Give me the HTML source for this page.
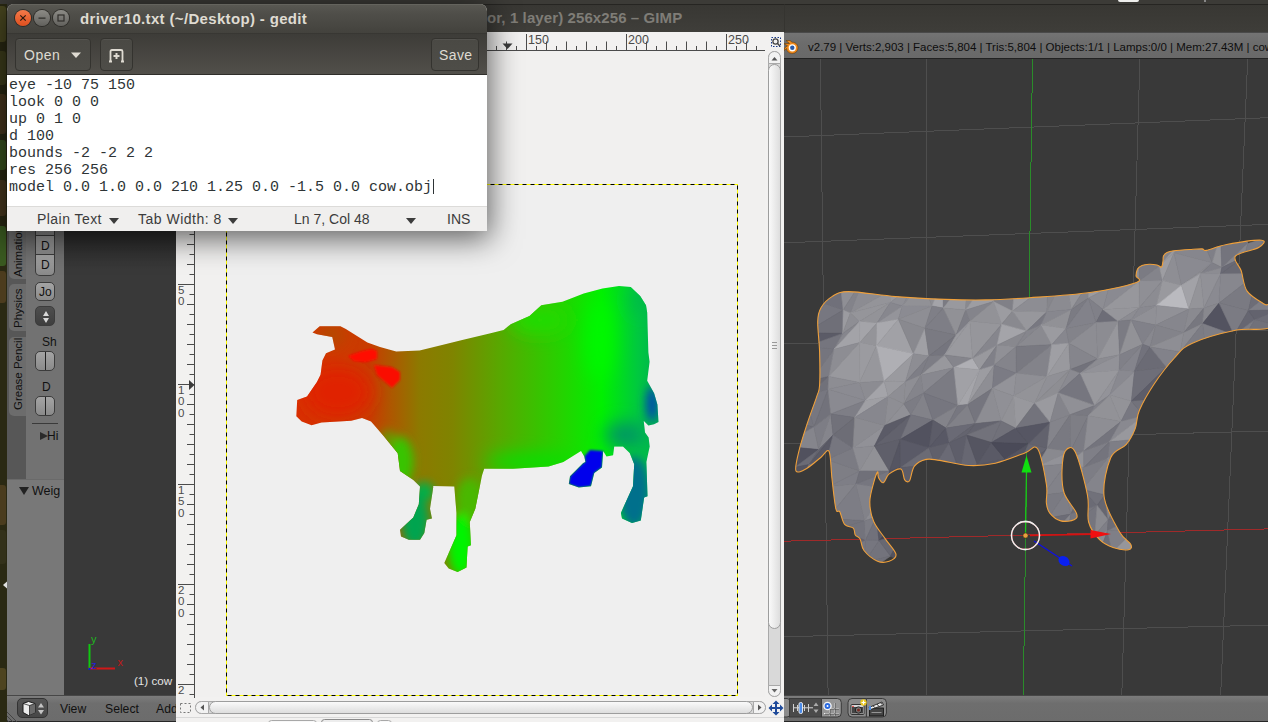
<!DOCTYPE html>
<html><head><meta charset="utf-8">
<style>
*{margin:0;padding:0;box-sizing:border-box}
html,body{width:1268px;height:722px;overflow:hidden;background:#3c3b37;font-family:"Liberation Sans",sans-serif}
.a{position:absolute}
#launch{left:0;top:4px;width:7px;height:718px;background:#2a2913}
/* blender */
#bl{left:7px;top:32px;width:1261px;height:690px;background:#393939}
#blinfo{left:784px;top:32px;width:484px;height:27px;background:linear-gradient(#747474,#6c6c6c 40%,#696969);border-top:1px solid #4a4a4a;border-bottom:1.5px solid #222}
#bltabs{left:7px;top:230px;width:19px;height:249px;background:#575757}
#blpanel{left:26px;top:230px;width:38px;height:249px;background:#727272;overflow:hidden}
#blhdr{left:7px;top:695px;width:1261px;height:27px;background:linear-gradient(#7c7c7c,#6e6e6e 30%,#6c6c6c);border-top:1px solid #474747;border-bottom:1.5px solid #262626}
/* gimp */
#gimp{left:176px;top:4px;width:608px;height:718px;background:#f2f1f0}
#gtitle{left:176px;top:4px;width:608px;height:28px;background:linear-gradient(#383733,#3f3e3a);border-top:1px solid #262522;color:#7f7d77;font-weight:bold;font-size:15px}
#btitle{left:784px;top:4px;width:484px;height:28px;background:linear-gradient(#383733,#3e3d39);border-top:1px solid #262522;border-left:1px solid #353430}
/* gedit */
#gedit{left:7px;top:4px;width:480px;height:227px;background:#f2f1f0;border-radius:7px 7px 0 0;overflow:hidden}
#gshadow{left:7px;top:4px;width:480px;height:227px;box-shadow:0 5px 30px 3px rgba(0,0,0,.6);border-radius:7px 7px 0 0}
#gedtitle{left:0;top:0;width:480px;height:29px;background:linear-gradient(#5a5953,#504f4a 30%,#43423d);box-shadow:inset 0 1px 0 #64635d}
#gedtool{left:0;top:29px;width:480px;height:42px;background:linear-gradient(#3d3c38,#514f4a);border-top:1px solid #383733;border-bottom:1px solid #2f2e2a}
#gedtext{left:0;top:71px;width:480px;height:131px;background:#fff;font-family:"Liberation Mono",monospace;font-size:15px;line-height:17px;color:#2e3436;padding:2px 0 0 2px;white-space:pre}
#gedstat{left:0;top:202px;width:480px;height:25px;background:#f0efee;border-top:1px solid #dcdbd9;font-size:14px;color:#3c3c3c}
.wb{position:absolute;top:6px;width:16px;height:16px;border-radius:50%;box-shadow:0 0 0 1px #2d2c28}
.wb svg{position:absolute;left:0;top:0}
.close{background:linear-gradient(#f47a4a,#df4f1e)}
.gray{background:linear-gradient(#8c8b86,#62615d)}
.ttl{font-size:15px;font-weight:bold;color:#dfdbd2;letter-spacing:.34px;white-space:pre}
.tbtn{border:1px solid #34332f;border-radius:4px;background:linear-gradient(#4a4944,#4e4d48);box-shadow:inset 0 1px 0 rgba(255,255,255,.06)}
#gedstat span{white-space:pre}
.tab{left:9px;width:17px;background:#6c6c6c;border-radius:5px 0 0 5px;overflow:hidden}
.vt{position:absolute;transform-origin:0 0;transform:rotate(-90deg);font-size:11.5px;color:#111;white-space:nowrap}
.bbtn{width:20px;border:1px solid #3c3c3c;border-radius:5px;background:linear-gradient(#a4a4a4,#8a8a8a)}
.bt{font-size:12px;color:#111;white-space:pre}
</style></head><body>
<div id="launch" class="a"></div>
<div class="a" style="left:1118px;top:-3px;width:21px;height:5px;background:#eeeeec;border-radius:2px"></div><div class="a" style="left:1204px;top:0;width:2px;height:2px;background:#888"></div>
<svg class="a" style="left:0;top:0" width="8" height="722">
<rect x="-3" y="6" width="9" height="36" rx="3" fill="#4a4820"/>
<rect x="-3" y="51" width="9" height="34" rx="3" fill="#3f3e1c"/>
<rect x="-3" y="94" width="9" height="40" rx="3" fill="#48381e"/>
<rect x="-3" y="140" width="9" height="30" rx="3" fill="#3a5420"/>
<rect x="-3" y="180" width="9" height="36" rx="3" fill="#4a3a20"/>
<rect x="-3" y="226" width="9" height="40" rx="3" fill="#3a5a20"/>
<rect x="-3" y="271" width="9" height="32" rx="3" fill="#4c3c1e"/>
<rect x="-3" y="485" width="9" height="40" rx="3" fill="#4a3c1e"/>
<rect x="-3" y="530" width="9" height="34" rx="3" fill="#33311a"/>
<path d="M3 585L7 581.5V588.5Z" fill="#e0e0e0"/>
<rect x="-3" y="668" width="9" height="22" rx="3" fill="#4e4420"/>
</svg>
<div id="bl" class="a"></div>
<svg class="a" style="left:0;top:0" width="1268" height="722" shape-rendering="crispEdges"><line x1="820.4" y1="59" x2="828.1" y2="695" stroke="#4e4e4e"/><line x1="926.3" y1="59" x2="926.3" y2="695" stroke="#4e4e4e"/><line x1="1139.9" y1="59" x2="1121.8" y2="695" stroke="#4e4e4e"/><line x1="1247.7" y1="59" x2="1220.7" y2="695" stroke="#4e4e4e"/><line x1="784" y1="137" x2="1268" y2="117.7" stroke="#4e4e4e"/><line x1="784" y1="242.8" x2="1268" y2="224.4" stroke="#4e4e4e"/><line x1="784" y1="344" x2="1268" y2="330" stroke="#4e4e4e"/><line x1="784" y1="444" x2="1268" y2="431" stroke="#4e4e4e"/><line x1="784" y1="636.7" x2="1268" y2="625.1" stroke="#4e4e4e"/><line x1="784" y1="541.2" x2="1268" y2="528.9" stroke="#a02a2a"/><line x1="1032.5" y1="59" x2="1023.3" y2="695" stroke="#2a8c2a"/></svg>
<svg class="a" style="left:0;top:0" width="1268" height="722">
<defs>
<clipPath id="bc"><path d="M848.7 291.6C859.3 291.6 879.7 295.3 895.7 296.6C911.8 297.9 930.0 298.8 945.0 299.4C960.0 299.9 971.3 300.2 985.4 299.9C999.5 299.6 1012.3 298.9 1029.7 297.7C1047.1 296.5 1072.2 295.1 1090.0 292.5C1107.8 289.9 1128.8 285.1 1136.5 282.4C1144.2 279.6 1135.8 278.2 1136.0 276.0C1136.2 273.8 1136.5 270.8 1137.5 269.0C1138.5 267.2 1140.1 266.3 1142.0 265.5C1143.9 264.7 1146.5 264.4 1149.0 264.3C1151.5 264.2 1154.9 264.6 1157.0 265.0C1159.1 265.4 1160.5 267.7 1161.5 267.0C1162.5 266.3 1162.7 262.8 1163.0 261.0C1163.3 259.2 1162.8 257.4 1163.5 256.0C1164.2 254.6 1165.2 253.4 1167.0 252.5C1168.8 251.6 1170.2 251.3 1174.0 250.8C1177.8 250.3 1185.3 249.8 1190.0 249.5C1194.7 249.2 1199.3 248.8 1202.0 248.9C1204.7 249.1 1202.2 251.1 1206.3 250.4C1210.4 249.7 1217.5 246.2 1226.7 244.5C1235.9 242.8 1256.3 239.7 1261.6 240.2C1266.9 240.7 1263.1 244.8 1258.7 247.5C1254.3 250.2 1238.3 252.3 1235.4 256.2C1232.5 260.1 1239.2 264.9 1241.2 270.7C1243.2 276.5 1243.2 285.5 1247.1 291.1C1251.0 296.7 1260.7 301.8 1264.5 304.2C1268.3 306.6 1269.1 301.7 1270.0 305.6C1270.9 309.5 1275.8 323.3 1270.0 327.4C1264.2 331.5 1248.4 327.6 1235.4 330.3C1222.4 333.0 1202.0 338.8 1191.8 343.4C1181.6 348.0 1180.7 351.2 1174.4 358.0C1168.1 364.8 1159.8 375.5 1154.0 384.2C1148.2 392.9 1142.6 402.9 1139.4 410.3C1136.2 417.8 1137.3 423.2 1135.1 428.9C1132.9 434.6 1130.4 439.6 1126.3 444.4C1122.2 449.2 1114.4 449.0 1110.7 457.7C1107.0 466.4 1102.6 484.1 1104.1 496.5C1105.6 508.9 1115.2 524.0 1119.6 532.0C1124.0 540.0 1129.2 541.2 1130.7 544.2C1132.2 547.2 1131.5 549.2 1128.5 549.7C1125.5 550.2 1117.8 549.2 1113.0 547.5C1108.2 545.8 1103.7 544.0 1099.6 539.7C1095.5 535.5 1090.6 529.4 1088.6 522.0C1086.6 514.6 1089.7 507.0 1087.5 495.4C1085.3 483.8 1079.0 459.5 1075.3 452.1C1071.6 444.7 1067.5 447.9 1065.3 451.0C1063.1 454.1 1062.2 464.0 1062.0 471.0C1061.8 478.0 1061.8 486.2 1064.2 493.2C1066.6 500.2 1074.8 508.7 1076.4 513.1C1078.1 517.5 1076.7 518.5 1074.1 519.8C1071.5 521.1 1064.8 522.0 1060.8 520.9C1056.8 519.8 1052.2 516.1 1049.8 513.1C1047.4 510.1 1047.0 507.9 1046.4 503.1C1045.8 498.3 1047.9 493.4 1046.4 484.3C1044.9 475.2 1041.3 454.0 1037.6 448.8C1033.9 443.6 1031.3 450.9 1024.3 453.3C1017.3 455.7 1004.6 461.2 995.4 463.2C986.1 465.2 978.1 466.0 968.8 465.5C959.5 465.0 946.7 461.4 939.6 460.4C932.5 459.4 930.3 458.4 926.1 459.4C921.9 460.4 917.1 462.6 914.4 466.2C911.6 469.8 911.2 478.4 909.6 480.7C908.0 483.0 906.2 481.7 904.7 479.8C903.2 477.9 903.5 470.1 900.9 469.1C898.3 468.1 892.1 471.6 889.2 473.9C886.3 476.2 885.2 482.0 883.4 482.7C881.6 483.4 879.5 479.6 878.5 477.8C877.5 476.0 878.4 471.2 877.6 472.0C876.8 472.8 875.0 477.7 873.7 482.7C872.4 487.7 869.8 495.6 869.8 502.1C869.8 508.6 871.1 515.4 873.7 521.5C876.3 527.6 881.6 533.4 885.3 538.9C889.0 544.4 895.4 550.7 896.0 554.4C896.6 558.1 892.3 560.1 889.2 561.2C886.1 562.3 881.8 563.0 877.6 561.2C873.4 559.4 866.9 554.2 864.0 550.5C861.1 546.8 861.6 541.5 860.1 538.9C858.6 536.3 856.4 536.8 855.3 535.0C854.2 533.2 855.1 530.0 853.3 528.2C851.5 526.4 846.9 527.1 844.6 524.4C842.4 521.7 841.2 514.4 839.8 511.8C838.3 509.2 837.2 514.4 835.9 508.9C834.6 503.4 833.1 488.4 832.0 478.8C830.9 469.2 830.9 455.2 829.1 451.6C827.3 448.0 824.7 454.4 821.0 457.2C817.3 460.0 811.3 465.9 807.1 468.2C802.9 470.5 797.4 473.8 796.0 471.0C794.6 468.2 796.9 459.4 798.8 451.6C800.6 443.8 804.1 433.2 807.1 424.0C810.1 414.8 814.7 402.8 816.8 396.3C818.9 389.8 819.1 392.6 819.6 385.2C820.1 377.8 819.9 362.6 819.6 352.0C819.3 341.4 817.5 328.9 817.7 321.5C817.9 314.1 818.6 311.8 821.0 307.7C823.4 303.6 827.4 299.3 832.0 296.6C836.6 293.9 838.1 291.6 848.7 291.6Z"/></clipPath>
</defs>
<g clip-path="url(#bc)">
<path d="M786.7 237.5L789.2 255.4L767.6 256.6Z" fill="#6a6a74" stroke="#6a6a74" stroke-width=".6"/><path d="M789.2 255.4L795.3 285.6L759.0 282.1Z" fill="#7e7e86" stroke="#7e7e86" stroke-width=".6"/><path d="M790.5 334.8L794.1 347.2L765.6 356.9Z" fill="#686872" stroke="#686872" stroke-width=".6"/><path d="M794.1 347.2L798.6 367.1L760.2 369.0Z" fill="#76767f" stroke="#76767f" stroke-width=".6"/><path d="M798.6 367.1L788.5 401.6L769.3 405.1Z" fill="#808088" stroke="#808088" stroke-width=".6"/><path d="M788.5 401.6L783.7 419.8L768.4 418.1Z" fill="#72727b" stroke="#72727b" stroke-width=".6"/><path d="M783.7 419.8L781.7 446.0L775.6 434.8Z" fill="#676771" stroke="#676771" stroke-width=".6"/><path d="M781.7 446.0L794.8 467.3L773.5 462.2Z" fill="#6e6e78" stroke="#6e6e78" stroke-width=".6"/><path d="M794.8 467.3L796.8 485.6L760.6 482.1Z" fill="#696974" stroke="#696974" stroke-width=".6"/><path d="M796.8 485.6L793.5 513.7L763.6 517.7Z" fill="#535360" stroke="#535360" stroke-width=".6"/><path d="M793.5 513.7L791.4 534.2L761.3 536.5Z" fill="#5e5e6a" stroke="#5e5e6a" stroke-width=".6"/><path d="M791.4 534.2L796.1 566.0L769.5 555.7Z" fill="#666670" stroke="#666670" stroke-width=".6"/><path d="M815.6 221.9L818.8 232.1L786.7 237.5Z" fill="#74747d" stroke="#74747d" stroke-width=".6"/><path d="M786.7 237.5L818.8 232.1L789.2 255.4Z" fill="#797982" stroke="#797982" stroke-width=".6"/><path d="M818.8 232.1L810.9 262.0L789.2 255.4Z" fill="#808088" stroke="#808088" stroke-width=".6"/><path d="M789.2 255.4L810.9 262.0L795.3 285.6Z" fill="#808087" stroke="#808087" stroke-width=".6"/><path d="M810.9 262.0L804.4 281.3L795.3 285.6Z" fill="#818188" stroke="#818188" stroke-width=".6"/><path d="M795.3 285.6L804.4 281.3L785.4 306.3Z" fill="#7c7c84" stroke="#7c7c84" stroke-width=".6"/><path d="M804.4 281.3L807.0 298.1L785.4 306.3Z" fill="#73737c" stroke="#73737c" stroke-width=".6"/><path d="M785.4 306.3L807.0 298.1L790.5 334.8Z" fill="#75757e" stroke="#75757e" stroke-width=".6"/><path d="M807.0 298.1L805.1 332.8L790.5 334.8Z" fill="#71717b" stroke="#71717b" stroke-width=".6"/><path d="M790.5 334.8L805.1 332.8L794.1 347.2Z" fill="#70707a" stroke="#70707a" stroke-width=".6"/><path d="M805.1 332.8L806.3 346.5L794.1 347.2Z" fill="#71717b" stroke="#71717b" stroke-width=".6"/><path d="M794.1 347.2L806.3 346.5L798.6 367.1Z" fill="#60606b" stroke="#60606b" stroke-width=".6"/><path d="M806.3 346.5L811.0 380.7L798.6 367.1Z" fill="#6f6f78" stroke="#6f6f78" stroke-width=".6"/><path d="M798.6 367.1L811.0 380.7L788.5 401.6Z" fill="#71717a" stroke="#71717a" stroke-width=".6"/><path d="M811.0 380.7L805.5 396.1L788.5 401.6Z" fill="#666671" stroke="#666671" stroke-width=".6"/><path d="M788.5 401.6L805.5 396.1L783.7 419.8Z" fill="#707079" stroke="#707079" stroke-width=".6"/><path d="M805.5 396.1L813.9 426.9L783.7 419.8Z" fill="#75757e" stroke="#75757e" stroke-width=".6"/><path d="M783.7 419.8L813.9 426.9L781.7 446.0Z" fill="#6d6d77" stroke="#6d6d77" stroke-width=".6"/><path d="M813.9 426.9L818.7 449.6L781.7 446.0Z" fill="#85858c" stroke="#85858c" stroke-width=".6"/><path d="M781.7 446.0L818.7 449.6L794.8 467.3Z" fill="#51515e" stroke="#51515e" stroke-width=".6"/><path d="M818.7 449.6L809.0 464.5L794.8 467.3Z" fill="#6b6b75" stroke="#6b6b75" stroke-width=".6"/><path d="M794.8 467.3L809.0 464.5L796.8 485.6Z" fill="#545461" stroke="#545461" stroke-width=".6"/><path d="M809.0 464.5L810.5 495.9L796.8 485.6Z" fill="#72727b" stroke="#72727b" stroke-width=".6"/><path d="M796.8 485.6L810.5 495.9L793.5 513.7Z" fill="#84848b" stroke="#84848b" stroke-width=".6"/><path d="M810.5 495.9L821.2 505.7L793.5 513.7Z" fill="#4b4b59" stroke="#4b4b59" stroke-width=".6"/><path d="M793.5 513.7L821.2 505.7L791.4 534.2Z" fill="#676772" stroke="#676772" stroke-width=".6"/><path d="M821.2 505.7L807.2 530.2L791.4 534.2Z" fill="#6b6b75" stroke="#6b6b75" stroke-width=".6"/><path d="M791.4 534.2L807.2 530.2L796.1 566.0Z" fill="#61616c" stroke="#61616c" stroke-width=".6"/><path d="M807.2 530.2L808.2 557.7L796.1 566.0Z" fill="#6a6a74" stroke="#6a6a74" stroke-width=".6"/><path d="M796.1 566.0L808.2 557.7L789.5 584.0Z" fill="#4a4a58" stroke="#4a4a58" stroke-width=".6"/><path d="M818.8 232.1L844.2 239.4L810.9 262.0Z" fill="#828289" stroke="#828289" stroke-width=".6"/><path d="M844.2 239.4L836.3 261.1L810.9 262.0Z" fill="#7c7c84" stroke="#7c7c84" stroke-width=".6"/><path d="M810.9 262.0L836.3 261.1L804.4 281.3Z" fill="#777780" stroke="#777780" stroke-width=".6"/><path d="M836.3 261.1L839.2 274.0L804.4 281.3Z" fill="#70707a" stroke="#70707a" stroke-width=".6"/><path d="M804.4 281.3L839.2 274.0L807.0 298.1Z" fill="#7d7d85" stroke="#7d7d85" stroke-width=".6"/><path d="M839.2 274.0L843.2 310.0L807.0 298.1Z" fill="#70707a" stroke="#70707a" stroke-width=".6"/><path d="M807.0 298.1L843.2 310.0L805.1 332.8Z" fill="#777780" stroke="#777780" stroke-width=".6"/><path d="M843.2 310.0L842.7 333.4L805.1 332.8Z" fill="#6f6f78" stroke="#6f6f78" stroke-width=".6"/><path d="M805.1 332.8L842.7 333.4L806.3 346.5Z" fill="#5b5b67" stroke="#5b5b67" stroke-width=".6"/><path d="M842.7 333.4L834.1 349.2L806.3 346.5Z" fill="#75757e" stroke="#75757e" stroke-width=".6"/><path d="M806.3 346.5L834.1 349.2L811.0 380.7Z" fill="#75757e" stroke="#75757e" stroke-width=".6"/><path d="M834.1 349.2L828.9 376.4L811.0 380.7Z" fill="#7c7c84" stroke="#7c7c84" stroke-width=".6"/><path d="M811.0 380.7L828.9 376.4L805.5 396.1Z" fill="#686872" stroke="#686872" stroke-width=".6"/><path d="M828.9 376.4L828.1 389.2L805.5 396.1Z" fill="#71717a" stroke="#71717a" stroke-width=".6"/><path d="M805.5 396.1L828.1 389.2L813.9 426.9Z" fill="#777780" stroke="#777780" stroke-width=".6"/><path d="M828.1 389.2L830.8 413.9L813.9 426.9Z" fill="#72727b" stroke="#72727b" stroke-width=".6"/><path d="M813.9 426.9L830.8 413.9L818.7 449.6Z" fill="#7d7d85" stroke="#7d7d85" stroke-width=".6"/><path d="M830.8 413.9L833.1 434.9L818.7 449.6Z" fill="#85858c" stroke="#85858c" stroke-width=".6"/><path d="M818.7 449.6L833.1 434.9L809.0 464.5Z" fill="#64646f" stroke="#64646f" stroke-width=".6"/><path d="M833.1 434.9L827.0 459.7L809.0 464.5Z" fill="#595965" stroke="#595965" stroke-width=".6"/><path d="M809.0 464.5L827.0 459.7L810.5 495.9Z" fill="#71717b" stroke="#71717b" stroke-width=".6"/><path d="M827.0 459.7L828.8 486.5L810.5 495.9Z" fill="#787881" stroke="#787881" stroke-width=".6"/><path d="M810.5 495.9L828.8 486.5L821.2 505.7Z" fill="#71717a" stroke="#71717a" stroke-width=".6"/><path d="M828.8 486.5L827.5 518.7L821.2 505.7Z" fill="#6f6f79" stroke="#6f6f79" stroke-width=".6"/><path d="M821.2 505.7L827.5 518.7L807.2 530.2Z" fill="#5f5f6a" stroke="#5f5f6a" stroke-width=".6"/><path d="M827.5 518.7L838.1 528.7L807.2 530.2Z" fill="#5d5d69" stroke="#5d5d69" stroke-width=".6"/><path d="M807.2 530.2L838.1 528.7L808.2 557.7Z" fill="#6e6e78" stroke="#6e6e78" stroke-width=".6"/><path d="M838.1 528.7L831.5 555.3L808.2 557.7Z" fill="#5a5a66" stroke="#5a5a66" stroke-width=".6"/><path d="M808.2 557.7L831.5 555.3L814.6 576.7Z" fill="#4f4f5d" stroke="#4f4f5d" stroke-width=".6"/><path d="M831.5 555.3L833.6 574.2L814.6 576.7Z" fill="#585864" stroke="#585864" stroke-width=".6"/><path d="M844.2 239.4L851.5 228.8L836.3 261.1Z" fill="#aaaaaf" stroke="#aaaaaf" stroke-width=".6"/><path d="M851.5 228.8L856.2 254.8L836.3 261.1Z" fill="#a3a3a8" stroke="#a3a3a8" stroke-width=".6"/><path d="M836.3 261.1L856.2 254.8L839.2 274.0Z" fill="#86868d" stroke="#86868d" stroke-width=".6"/><path d="M856.2 254.8L864.9 275.9L839.2 274.0Z" fill="#85858c" stroke="#85858c" stroke-width=".6"/><path d="M839.2 274.0L864.9 275.9L843.2 310.0Z" fill="#8f8f95" stroke="#8f8f95" stroke-width=".6"/><path d="M864.9 275.9L850.4 313.1L843.2 310.0Z" fill="#83838a" stroke="#83838a" stroke-width=".6"/><path d="M843.2 310.0L850.4 313.1L842.7 333.4Z" fill="#9b9ba0" stroke="#9b9ba0" stroke-width=".6"/><path d="M850.4 313.1L859.5 321.6L842.7 333.4Z" fill="#8e8e94" stroke="#8e8e94" stroke-width=".6"/><path d="M842.7 333.4L859.5 321.6L834.1 349.2Z" fill="#86868d" stroke="#86868d" stroke-width=".6"/><path d="M859.5 321.6L859.8 342.5L834.1 349.2Z" fill="#a3a3a8" stroke="#a3a3a8" stroke-width=".6"/><path d="M834.1 349.2L859.8 342.5L828.9 376.4Z" fill="#8d8d93" stroke="#8d8d93" stroke-width=".6"/><path d="M859.8 342.5L859.5 382.6L828.9 376.4Z" fill="#99999e" stroke="#99999e" stroke-width=".6"/><path d="M828.9 376.4L859.5 382.6L828.1 389.2Z" fill="#8d8d93" stroke="#8d8d93" stroke-width=".6"/><path d="M859.5 382.6L865.5 400.5L828.1 389.2Z" fill="#8b8b92" stroke="#8b8b92" stroke-width=".6"/><path d="M828.1 389.2L865.5 400.5L830.8 413.9Z" fill="#8a8a91" stroke="#8a8a91" stroke-width=".6"/><path d="M865.5 400.5L854.7 417.6L830.8 413.9Z" fill="#7e7e86" stroke="#7e7e86" stroke-width=".6"/><path d="M830.8 413.9L854.7 417.6L833.1 434.9Z" fill="#71717a" stroke="#71717a" stroke-width=".6"/><path d="M854.7 417.6L853.0 447.9L833.1 434.9Z" fill="#6d6d76" stroke="#6d6d76" stroke-width=".6"/><path d="M833.1 434.9L853.0 447.9L827.0 459.7Z" fill="#76767f" stroke="#76767f" stroke-width=".6"/><path d="M853.0 447.9L859.6 471.0L827.0 459.7Z" fill="#7b7b83" stroke="#7b7b83" stroke-width=".6"/><path d="M827.0 459.7L859.6 471.0L828.8 486.5Z" fill="#7e7e85" stroke="#7e7e85" stroke-width=".6"/><path d="M859.6 471.0L855.9 484.0L828.8 486.5Z" fill="#7e7e86" stroke="#7e7e86" stroke-width=".6"/><path d="M828.8 486.5L855.9 484.0L827.5 518.7Z" fill="#83838a" stroke="#83838a" stroke-width=".6"/><path d="M855.9 484.0L864.6 520.7L827.5 518.7Z" fill="#7d7d85" stroke="#7d7d85" stroke-width=".6"/><path d="M827.5 518.7L864.6 520.7L838.1 528.7Z" fill="#73737c" stroke="#73737c" stroke-width=".6"/><path d="M864.6 520.7L865.3 540.5L838.1 528.7Z" fill="#73737c" stroke="#73737c" stroke-width=".6"/><path d="M838.1 528.7L865.3 540.5L831.5 555.3Z" fill="#63636e" stroke="#63636e" stroke-width=".6"/><path d="M865.3 540.5L864.7 562.3L831.5 555.3Z" fill="#787881" stroke="#787881" stroke-width=".6"/><path d="M831.5 555.3L864.7 562.3L833.6 574.2Z" fill="#7f7f86" stroke="#7f7f86" stroke-width=".6"/><path d="M851.5 228.8L877.7 239.5L856.2 254.8Z" fill="#949499" stroke="#949499" stroke-width=".6"/><path d="M877.7 239.5L890.2 258.1L856.2 254.8Z" fill="#8d8d93" stroke="#8d8d93" stroke-width=".6"/><path d="M856.2 254.8L890.2 258.1L864.9 275.9Z" fill="#8b8b92" stroke="#8b8b92" stroke-width=".6"/><path d="M890.2 258.1L889.9 290.8L864.9 275.9Z" fill="#97979c" stroke="#97979c" stroke-width=".6"/><path d="M864.9 275.9L889.9 290.8L850.4 313.1Z" fill="#8c8c92" stroke="#8c8c92" stroke-width=".6"/><path d="M889.9 290.8L890.2 302.6L850.4 313.1Z" fill="#949499" stroke="#949499" stroke-width=".6"/><path d="M850.4 313.1L890.2 302.6L859.5 321.6Z" fill="#95959a" stroke="#95959a" stroke-width=".6"/><path d="M890.2 302.6L877.0 323.1L859.5 321.6Z" fill="#939398" stroke="#939398" stroke-width=".6"/><path d="M859.5 321.6L877.0 323.1L859.8 342.5Z" fill="#a4a4a9" stroke="#a4a4a9" stroke-width=".6"/><path d="M877.0 323.1L876.5 345.7L859.8 342.5Z" fill="#949499" stroke="#949499" stroke-width=".6"/><path d="M859.8 342.5L876.5 345.7L859.5 382.6Z" fill="#9b9ba0" stroke="#9b9ba0" stroke-width=".6"/><path d="M876.5 345.7L884.2 381.2L859.5 382.6Z" fill="#97979c" stroke="#97979c" stroke-width=".6"/><path d="M859.5 382.6L884.2 381.2L865.5 400.5Z" fill="#8c8c92" stroke="#8c8c92" stroke-width=".6"/><path d="M884.2 381.2L888.1 396.6L865.5 400.5Z" fill="#a4a4a9" stroke="#a4a4a9" stroke-width=".6"/><path d="M865.5 400.5L888.1 396.6L854.7 417.6Z" fill="#9f9fa4" stroke="#9f9fa4" stroke-width=".6"/><path d="M888.1 396.6L884.8 425.4L854.7 417.6Z" fill="#87878e" stroke="#87878e" stroke-width=".6"/><path d="M854.7 417.6L884.8 425.4L853.0 447.9Z" fill="#8b8b91" stroke="#8b8b91" stroke-width=".6"/><path d="M884.8 425.4L874.5 445.9L853.0 447.9Z" fill="#919197" stroke="#919197" stroke-width=".6"/><path d="M853.0 447.9L874.5 445.9L859.6 471.0Z" fill="#8d8d93" stroke="#8d8d93" stroke-width=".6"/><path d="M874.5 445.9L889.4 471.1L859.6 471.0Z" fill="#919196" stroke="#919196" stroke-width=".6"/><path d="M859.6 471.0L889.4 471.1L855.9 484.0Z" fill="#707079" stroke="#707079" stroke-width=".6"/><path d="M889.4 471.1L886.5 488.6L855.9 484.0Z" fill="#76767f" stroke="#76767f" stroke-width=".6"/><path d="M855.9 484.0L886.5 488.6L864.6 520.7Z" fill="#828289" stroke="#828289" stroke-width=".6"/><path d="M886.5 488.6L876.2 517.2L864.6 520.7Z" fill="#8c8c92" stroke="#8c8c92" stroke-width=".6"/><path d="M864.6 520.7L876.2 517.2L865.3 540.5Z" fill="#7c7c84" stroke="#7c7c84" stroke-width=".6"/><path d="M876.2 517.2L879.0 540.4L865.3 540.5Z" fill="#71717b" stroke="#71717b" stroke-width=".6"/><path d="M865.3 540.5L879.0 540.4L864.7 562.3Z" fill="#76767f" stroke="#76767f" stroke-width=".6"/><path d="M879.0 540.4L890.5 556.1L864.7 562.3Z" fill="#73737c" stroke="#73737c" stroke-width=".6"/><path d="M864.7 562.3L890.5 556.1L854.1 581.3Z" fill="#707079" stroke="#707079" stroke-width=".6"/><path d="M877.7 239.5L912.3 241.5L890.2 258.1Z" fill="#9f9fa4" stroke="#9f9fa4" stroke-width=".6"/><path d="M912.3 241.5L898.6 264.9L890.2 258.1Z" fill="#87878e" stroke="#87878e" stroke-width=".6"/><path d="M890.2 258.1L898.6 264.9L889.9 290.8Z" fill="#8d8d93" stroke="#8d8d93" stroke-width=".6"/><path d="M898.6 264.9L913.6 284.8L889.9 290.8Z" fill="#a4a4a9" stroke="#a4a4a9" stroke-width=".6"/><path d="M889.9 290.8L913.6 284.8L890.2 302.6Z" fill="#99999e" stroke="#99999e" stroke-width=".6"/><path d="M913.6 284.8L902.3 305.9L890.2 302.6Z" fill="#8f8f95" stroke="#8f8f95" stroke-width=".6"/><path d="M890.2 302.6L902.3 305.9L877.0 323.1Z" fill="#87878e" stroke="#87878e" stroke-width=".6"/><path d="M902.3 305.9L898.4 319.3L877.0 323.1Z" fill="#94949a" stroke="#94949a" stroke-width=".6"/><path d="M877.0 323.1L898.4 319.3L876.5 345.7Z" fill="#a9a9ae" stroke="#a9a9ae" stroke-width=".6"/><path d="M898.4 319.3L913.5 353.7L876.5 345.7Z" fill="#a1a1a6" stroke="#a1a1a6" stroke-width=".6"/><path d="M876.5 345.7L913.5 353.7L884.2 381.2Z" fill="#afafb4" stroke="#afafb4" stroke-width=".6"/><path d="M913.5 353.7L905.5 381.8L884.2 381.2Z" fill="#9a9a9f" stroke="#9a9a9f" stroke-width=".6"/><path d="M884.2 381.2L905.5 381.8L888.1 396.6Z" fill="#9b9ba0" stroke="#9b9ba0" stroke-width=".6"/><path d="M905.5 381.8L903.8 403.7L888.1 396.6Z" fill="#8e8e94" stroke="#8e8e94" stroke-width=".6"/><path d="M888.1 396.6L903.8 403.7L884.8 425.4Z" fill="#8e8e94" stroke="#8e8e94" stroke-width=".6"/><path d="M903.8 403.7L910.9 414.8L884.8 425.4Z" fill="#909096" stroke="#909096" stroke-width=".6"/><path d="M884.8 425.4L910.9 414.8L874.5 445.9Z" fill="#5b5b67" stroke="#5b5b67" stroke-width=".6"/><path d="M910.9 414.8L900.5 439.3L874.5 445.9Z" fill="#62626d" stroke="#62626d" stroke-width=".6"/><path d="M874.5 445.9L900.5 439.3L889.4 471.1Z" fill="#5f5f6a" stroke="#5f5f6a" stroke-width=".6"/><path d="M900.5 439.3L900.3 467.6L889.4 471.1Z" fill="#555562" stroke="#555562" stroke-width=".6"/><path d="M889.4 471.1L900.3 467.6L886.5 488.6Z" fill="#52525f" stroke="#52525f" stroke-width=".6"/><path d="M900.3 467.6L900.7 487.5L886.5 488.6Z" fill="#5e5e6a" stroke="#5e5e6a" stroke-width=".6"/><path d="M886.5 488.6L900.7 487.5L876.2 517.2Z" fill="#6b6b75" stroke="#6b6b75" stroke-width=".6"/><path d="M900.7 487.5L898.4 519.4L876.2 517.2Z" fill="#5b5b67" stroke="#5b5b67" stroke-width=".6"/><path d="M876.2 517.2L898.4 519.4L879.0 540.4Z" fill="#575763" stroke="#575763" stroke-width=".6"/><path d="M898.4 519.4L902.4 534.2L879.0 540.4Z" fill="#464654" stroke="#464654" stroke-width=".6"/><path d="M879.0 540.4L902.4 534.2L890.5 556.1Z" fill="#686872" stroke="#686872" stroke-width=".6"/><path d="M902.4 534.2L906.5 565.3L890.5 556.1Z" fill="#535360" stroke="#535360" stroke-width=".6"/><path d="M912.3 241.5L926.9 230.3L898.6 264.9Z" fill="#8e8e94" stroke="#8e8e94" stroke-width=".6"/><path d="M926.9 230.3L919.1 264.4L898.6 264.9Z" fill="#828289" stroke="#828289" stroke-width=".6"/><path d="M898.6 264.9L919.1 264.4L913.6 284.8Z" fill="#8c8c92" stroke="#8c8c92" stroke-width=".6"/><path d="M919.1 264.4L922.1 281.5L913.6 284.8Z" fill="#818188" stroke="#818188" stroke-width=".6"/><path d="M913.6 284.8L922.1 281.5L902.3 305.9Z" fill="#8d8d93" stroke="#8d8d93" stroke-width=".6"/><path d="M922.1 281.5L932.1 306.0L902.3 305.9Z" fill="#919196" stroke="#919196" stroke-width=".6"/><path d="M902.3 305.9L932.1 306.0L898.4 319.3Z" fill="#8b8b92" stroke="#8b8b92" stroke-width=".6"/><path d="M932.1 306.0L924.9 328.3L898.4 319.3Z" fill="#8e8e94" stroke="#8e8e94" stroke-width=".6"/><path d="M898.4 319.3L924.9 328.3L913.5 353.7Z" fill="#89898f" stroke="#89898f" stroke-width=".6"/><path d="M924.9 328.3L929.0 356.1L913.5 353.7Z" fill="#a0a0a5" stroke="#a0a0a5" stroke-width=".6"/><path d="M913.5 353.7L929.0 356.1L905.5 381.8Z" fill="#8d8d93" stroke="#8d8d93" stroke-width=".6"/><path d="M929.0 356.1L920.9 375.1L905.5 381.8Z" fill="#7e7e86" stroke="#7e7e86" stroke-width=".6"/><path d="M905.5 381.8L920.9 375.1L903.8 403.7Z" fill="#8e8e94" stroke="#8e8e94" stroke-width=".6"/><path d="M920.9 375.1L923.5 393.0L903.8 403.7Z" fill="#84848b" stroke="#84848b" stroke-width=".6"/><path d="M903.8 403.7L923.5 393.0L910.9 414.8Z" fill="#7c7c84" stroke="#7c7c84" stroke-width=".6"/><path d="M923.5 393.0L932.9 420.1L910.9 414.8Z" fill="#828289" stroke="#828289" stroke-width=".6"/><path d="M910.9 414.8L932.9 420.1L900.5 439.3Z" fill="#74747d" stroke="#74747d" stroke-width=".6"/><path d="M932.9 420.1L929.1 447.7L900.5 439.3Z" fill="#52525f" stroke="#52525f" stroke-width=".6"/><path d="M900.5 439.3L929.1 447.7L900.3 467.6Z" fill="#5a5a67" stroke="#5a5a67" stroke-width=".6"/><path d="M929.1 447.7L935.4 465.0L900.3 467.6Z" fill="#6b6b75" stroke="#6b6b75" stroke-width=".6"/><path d="M900.3 467.6L935.4 465.0L900.7 487.5Z" fill="#5d5d69" stroke="#5d5d69" stroke-width=".6"/><path d="M935.4 465.0L930.0 489.1L900.7 487.5Z" fill="#545461" stroke="#545461" stroke-width=".6"/><path d="M900.7 487.5L930.0 489.1L898.4 519.4Z" fill="#565663" stroke="#565663" stroke-width=".6"/><path d="M930.0 489.1L928.2 515.5L898.4 519.4Z" fill="#535360" stroke="#535360" stroke-width=".6"/><path d="M898.4 519.4L928.2 515.5L902.4 534.2Z" fill="#535360" stroke="#535360" stroke-width=".6"/><path d="M928.2 515.5L927.1 535.6L902.4 534.2Z" fill="#5b5b67" stroke="#5b5b67" stroke-width=".6"/><path d="M902.4 534.2L927.1 535.6L906.5 565.3Z" fill="#51515e" stroke="#51515e" stroke-width=".6"/><path d="M927.1 535.6L927.6 565.9L906.5 565.3Z" fill="#464654" stroke="#464654" stroke-width=".6"/><path d="M926.9 230.3L957.1 229.5L919.1 264.4Z" fill="#8e8e94" stroke="#8e8e94" stroke-width=".6"/><path d="M957.1 229.5L944.2 258.0L919.1 264.4Z" fill="#84848b" stroke="#84848b" stroke-width=".6"/><path d="M919.1 264.4L944.2 258.0L922.1 281.5Z" fill="#949499" stroke="#949499" stroke-width=".6"/><path d="M944.2 258.0L943.3 277.3L922.1 281.5Z" fill="#86868d" stroke="#86868d" stroke-width=".6"/><path d="M922.1 281.5L943.3 277.3L932.1 306.0Z" fill="#8e8e94" stroke="#8e8e94" stroke-width=".6"/><path d="M943.3 277.3L943.3 308.1L932.1 306.0Z" fill="#a4a4a9" stroke="#a4a4a9" stroke-width=".6"/><path d="M932.1 306.0L943.3 308.1L924.9 328.3Z" fill="#7f7f87" stroke="#7f7f87" stroke-width=".6"/><path d="M943.3 308.1L956.1 335.1L924.9 328.3Z" fill="#7e7e86" stroke="#7e7e86" stroke-width=".6"/><path d="M924.9 328.3L956.1 335.1L929.0 356.1Z" fill="#7a7a82" stroke="#7a7a82" stroke-width=".6"/><path d="M956.1 335.1L944.8 354.9L929.0 356.1Z" fill="#75757e" stroke="#75757e" stroke-width=".6"/><path d="M929.0 356.1L944.8 354.9L920.9 375.1Z" fill="#7d7d85" stroke="#7d7d85" stroke-width=".6"/><path d="M944.8 354.9L953.9 367.6L920.9 375.1Z" fill="#98989d" stroke="#98989d" stroke-width=".6"/><path d="M920.9 375.1L953.9 367.6L923.5 393.0Z" fill="#88888f" stroke="#88888f" stroke-width=".6"/><path d="M953.9 367.6L957.9 405.4L923.5 393.0Z" fill="#7b7b83" stroke="#7b7b83" stroke-width=".6"/><path d="M923.5 393.0L957.9 405.4L932.9 420.1Z" fill="#76767f" stroke="#76767f" stroke-width=".6"/><path d="M957.9 405.4L946.0 428.1L932.9 420.1Z" fill="#83838a" stroke="#83838a" stroke-width=".6"/><path d="M932.9 420.1L946.0 428.1L929.1 447.7Z" fill="#5c5c68" stroke="#5c5c68" stroke-width=".6"/><path d="M946.0 428.1L949.2 442.8L929.1 447.7Z" fill="#585865" stroke="#585865" stroke-width=".6"/><path d="M929.1 447.7L949.2 442.8L935.4 465.0Z" fill="#60606b" stroke="#60606b" stroke-width=".6"/><path d="M949.2 442.8L959.8 472.0L935.4 465.0Z" fill="#6a6a75" stroke="#6a6a75" stroke-width=".6"/><path d="M935.4 465.0L959.8 472.0L930.0 489.1Z" fill="#6b6b75" stroke="#6b6b75" stroke-width=".6"/><path d="M959.8 472.0L944.9 487.8L930.0 489.1Z" fill="#61616c" stroke="#61616c" stroke-width=".6"/><path d="M930.0 489.1L944.9 487.8L928.2 515.5Z" fill="#565663" stroke="#565663" stroke-width=".6"/><path d="M944.9 487.8L951.3 509.1L928.2 515.5Z" fill="#565663" stroke="#565663" stroke-width=".6"/><path d="M928.2 515.5L951.3 509.1L927.1 535.6Z" fill="#676772" stroke="#676772" stroke-width=".6"/><path d="M951.3 509.1L945.5 531.7L927.1 535.6Z" fill="#63636e" stroke="#63636e" stroke-width=".6"/><path d="M927.1 535.6L945.5 531.7L927.6 565.9Z" fill="#4f4f5c" stroke="#4f4f5c" stroke-width=".6"/><path d="M945.5 531.7L955.0 549.4L927.6 565.9Z" fill="#575764" stroke="#575764" stroke-width=".6"/><path d="M927.6 565.9L955.0 549.4L931.6 587.8Z" fill="#545461" stroke="#545461" stroke-width=".6"/><path d="M957.1 229.5L966.2 244.7L944.2 258.0Z" fill="#8f8f95" stroke="#8f8f95" stroke-width=".6"/><path d="M966.2 244.7L979.2 267.5L944.2 258.0Z" fill="#88888f" stroke="#88888f" stroke-width=".6"/><path d="M944.2 258.0L979.2 267.5L943.3 277.3Z" fill="#7f7f86" stroke="#7f7f86" stroke-width=".6"/><path d="M979.2 267.5L966.9 277.8L943.3 277.3Z" fill="#87878e" stroke="#87878e" stroke-width=".6"/><path d="M943.3 277.3L966.9 277.8L943.3 308.1Z" fill="#7b7b83" stroke="#7b7b83" stroke-width=".6"/><path d="M966.9 277.8L965.7 310.0L943.3 308.1Z" fill="#99999e" stroke="#99999e" stroke-width=".6"/><path d="M943.3 308.1L965.7 310.0L956.1 335.1Z" fill="#919196" stroke="#919196" stroke-width=".6"/><path d="M965.7 310.0L969.9 321.3L956.1 335.1Z" fill="#7d7d85" stroke="#7d7d85" stroke-width=".6"/><path d="M956.1 335.1L969.9 321.3L944.8 354.9Z" fill="#9a9a9f" stroke="#9a9a9f" stroke-width=".6"/><path d="M969.9 321.3L972.6 358.4L944.8 354.9Z" fill="#9a9a9f" stroke="#9a9a9f" stroke-width=".6"/><path d="M944.8 354.9L972.6 358.4L953.9 367.6Z" fill="#85858c" stroke="#85858c" stroke-width=".6"/><path d="M972.6 358.4L979.7 369.7L953.9 367.6Z" fill="#afafb4" stroke="#afafb4" stroke-width=".6"/><path d="M953.9 367.6L979.7 369.7L957.9 405.4Z" fill="#a1a1a6" stroke="#a1a1a6" stroke-width=".6"/><path d="M979.7 369.7L967.7 404.5L957.9 405.4Z" fill="#a5a5aa" stroke="#a5a5aa" stroke-width=".6"/><path d="M957.9 405.4L967.7 404.5L946.0 428.1Z" fill="#777780" stroke="#777780" stroke-width=".6"/><path d="M967.7 404.5L975.3 423.6L946.0 428.1Z" fill="#818188" stroke="#818188" stroke-width=".6"/><path d="M946.0 428.1L975.3 423.6L949.2 442.8Z" fill="#6a6a75" stroke="#6a6a75" stroke-width=".6"/><path d="M975.3 423.6L966.6 435.0L949.2 442.8Z" fill="#64646f" stroke="#64646f" stroke-width=".6"/><path d="M949.2 442.8L966.6 435.0L959.8 472.0Z" fill="#5e5e6a" stroke="#5e5e6a" stroke-width=".6"/><path d="M966.6 435.0L977.4 464.7L959.8 472.0Z" fill="#676772" stroke="#676772" stroke-width=".6"/><path d="M959.8 472.0L977.4 464.7L944.9 487.8Z" fill="#464654" stroke="#464654" stroke-width=".6"/><path d="M977.4 464.7L966.3 496.9L944.9 487.8Z" fill="#484856" stroke="#484856" stroke-width=".6"/><path d="M944.9 487.8L966.3 496.9L951.3 509.1Z" fill="#464654" stroke="#464654" stroke-width=".6"/><path d="M966.3 496.9L976.4 517.4L951.3 509.1Z" fill="#4e4e5c" stroke="#4e4e5c" stroke-width=".6"/><path d="M951.3 509.1L976.4 517.4L945.5 531.7Z" fill="#4d4d5b" stroke="#4d4d5b" stroke-width=".6"/><path d="M976.4 517.4L966.5 541.4L945.5 531.7Z" fill="#575764" stroke="#575764" stroke-width=".6"/><path d="M945.5 531.7L966.5 541.4L955.0 549.4Z" fill="#555562" stroke="#555562" stroke-width=".6"/><path d="M966.5 541.4L966.2 564.5L955.0 549.4Z" fill="#52525f" stroke="#52525f" stroke-width=".6"/><path d="M955.0 549.4L966.2 564.5L952.0 579.9Z" fill="#4a4a58" stroke="#4a4a58" stroke-width=".6"/><path d="M966.2 244.7L997.5 231.3L979.2 267.5Z" fill="#898990" stroke="#898990" stroke-width=".6"/><path d="M997.5 231.3L990.0 252.9L979.2 267.5Z" fill="#98989d" stroke="#98989d" stroke-width=".6"/><path d="M979.2 267.5L990.0 252.9L966.9 277.8Z" fill="#96969b" stroke="#96969b" stroke-width=".6"/><path d="M990.0 252.9L988.9 276.6L966.9 277.8Z" fill="#8e8e94" stroke="#8e8e94" stroke-width=".6"/><path d="M966.9 277.8L988.9 276.6L965.7 310.0Z" fill="#89898f" stroke="#89898f" stroke-width=".6"/><path d="M988.9 276.6L993.6 301.5L965.7 310.0Z" fill="#9d9da2" stroke="#9d9da2" stroke-width=".6"/><path d="M965.7 310.0L993.6 301.5L969.9 321.3Z" fill="#84848b" stroke="#84848b" stroke-width=".6"/><path d="M993.6 301.5L1001.7 324.2L969.9 321.3Z" fill="#929297" stroke="#929297" stroke-width=".6"/><path d="M969.9 321.3L1001.7 324.2L972.6 358.4Z" fill="#96969b" stroke="#96969b" stroke-width=".6"/><path d="M1001.7 324.2L997.0 345.2L972.6 358.4Z" fill="#86868d" stroke="#86868d" stroke-width=".6"/><path d="M972.6 358.4L997.0 345.2L979.7 369.7Z" fill="#99999e" stroke="#99999e" stroke-width=".6"/><path d="M997.0 345.2L994.2 365.3L979.7 369.7Z" fill="#808088" stroke="#808088" stroke-width=".6"/><path d="M979.7 369.7L994.2 365.3L967.7 404.5Z" fill="#9c9ca1" stroke="#9c9ca1" stroke-width=".6"/><path d="M994.2 365.3L992.5 388.3L967.7 404.5Z" fill="#8e8e94" stroke="#8e8e94" stroke-width=".6"/><path d="M967.7 404.5L992.5 388.3L975.3 423.6Z" fill="#75757e" stroke="#75757e" stroke-width=".6"/><path d="M992.5 388.3L1001.2 420.9L975.3 423.6Z" fill="#8d8d93" stroke="#8d8d93" stroke-width=".6"/><path d="M975.3 423.6L1001.2 420.9L966.6 435.0Z" fill="#64646f" stroke="#64646f" stroke-width=".6"/><path d="M1001.2 420.9L991.4 442.5L966.6 435.0Z" fill="#72727b" stroke="#72727b" stroke-width=".6"/><path d="M966.6 435.0L991.4 442.5L977.4 464.7Z" fill="#555561" stroke="#555561" stroke-width=".6"/><path d="M991.4 442.5L1004.8 458.9L977.4 464.7Z" fill="#5a5a66" stroke="#5a5a66" stroke-width=".6"/><path d="M977.4 464.7L1004.8 458.9L966.3 496.9Z" fill="#595965" stroke="#595965" stroke-width=".6"/><path d="M1004.8 458.9L1002.7 487.8L966.3 496.9Z" fill="#52525f" stroke="#52525f" stroke-width=".6"/><path d="M966.3 496.9L1002.7 487.8L976.4 517.4Z" fill="#575764" stroke="#575764" stroke-width=".6"/><path d="M1002.7 487.8L996.9 518.0L976.4 517.4Z" fill="#4e4e5c" stroke="#4e4e5c" stroke-width=".6"/><path d="M976.4 517.4L996.9 518.0L966.5 541.4Z" fill="#5b5b67" stroke="#5b5b67" stroke-width=".6"/><path d="M996.9 518.0L995.1 535.1L966.5 541.4Z" fill="#535360" stroke="#535360" stroke-width=".6"/><path d="M966.5 541.4L995.1 535.1L966.2 564.5Z" fill="#545461" stroke="#545461" stroke-width=".6"/><path d="M995.1 535.1L1000.4 566.7L966.2 564.5Z" fill="#464654" stroke="#464654" stroke-width=".6"/><path d="M966.2 564.5L1000.4 566.7L973.2 578.1Z" fill="#5e5e69" stroke="#5e5e69" stroke-width=".6"/><path d="M997.5 231.3L1012.0 229.3L990.0 252.9Z" fill="#8f8f95" stroke="#8f8f95" stroke-width=".6"/><path d="M1012.0 229.3L1012.3 263.3L990.0 252.9Z" fill="#7a7a83" stroke="#7a7a83" stroke-width=".6"/><path d="M990.0 252.9L1012.3 263.3L988.9 276.6Z" fill="#8e8e94" stroke="#8e8e94" stroke-width=".6"/><path d="M1012.3 263.3L1015.6 275.9L988.9 276.6Z" fill="#929297" stroke="#929297" stroke-width=".6"/><path d="M988.9 276.6L1015.6 275.9L993.6 301.5Z" fill="#98989d" stroke="#98989d" stroke-width=".6"/><path d="M1015.6 275.9L1012.5 311.1L993.6 301.5Z" fill="#808087" stroke="#808087" stroke-width=".6"/><path d="M993.6 301.5L1012.5 311.1L1001.7 324.2Z" fill="#9c9ca1" stroke="#9c9ca1" stroke-width=".6"/><path d="M1012.5 311.1L1026.7 331.1L1001.7 324.2Z" fill="#89898f" stroke="#89898f" stroke-width=".6"/><path d="M1001.7 324.2L1026.7 331.1L997.0 345.2Z" fill="#a4a4a9" stroke="#a4a4a9" stroke-width=".6"/><path d="M1026.7 331.1L1016.1 346.4L997.0 345.2Z" fill="#88888e" stroke="#88888e" stroke-width=".6"/><path d="M997.0 345.2L1016.1 346.4L994.2 365.3Z" fill="#909096" stroke="#909096" stroke-width=".6"/><path d="M1016.1 346.4L1016.3 373.3L994.2 365.3Z" fill="#84848b" stroke="#84848b" stroke-width=".6"/><path d="M994.2 365.3L1016.3 373.3L992.5 388.3Z" fill="#7b7b84" stroke="#7b7b84" stroke-width=".6"/><path d="M1016.3 373.3L1013.8 396.0L992.5 388.3Z" fill="#939399" stroke="#939399" stroke-width=".6"/><path d="M992.5 388.3L1013.8 396.0L1001.2 420.9Z" fill="#909096" stroke="#909096" stroke-width=".6"/><path d="M1013.8 396.0L1015.7 428.3L1001.2 420.9Z" fill="#929297" stroke="#929297" stroke-width=".6"/><path d="M1001.2 420.9L1015.7 428.3L991.4 442.5Z" fill="#71717a" stroke="#71717a" stroke-width=".6"/><path d="M1015.7 428.3L1028.5 443.8L991.4 442.5Z" fill="#565663" stroke="#565663" stroke-width=".6"/><path d="M991.4 442.5L1028.5 443.8L1004.8 458.9Z" fill="#4a4a58" stroke="#4a4a58" stroke-width=".6"/><path d="M1028.5 443.8L1015.4 474.4L1004.8 458.9Z" fill="#545461" stroke="#545461" stroke-width=".6"/><path d="M1004.8 458.9L1015.4 474.4L1002.7 487.8Z" fill="#4e4e5c" stroke="#4e4e5c" stroke-width=".6"/><path d="M1015.4 474.4L1016.6 486.4L1002.7 487.8Z" fill="#4c4c5a" stroke="#4c4c5a" stroke-width=".6"/><path d="M1002.7 487.8L1016.6 486.4L996.9 518.0Z" fill="#5b5b67" stroke="#5b5b67" stroke-width=".6"/><path d="M1016.6 486.4L1011.0 509.9L996.9 518.0Z" fill="#585864" stroke="#585864" stroke-width=".6"/><path d="M996.9 518.0L1011.0 509.9L995.1 535.1Z" fill="#50505e" stroke="#50505e" stroke-width=".6"/><path d="M1011.0 509.9L1019.5 535.0L995.1 535.1Z" fill="#555562" stroke="#555562" stroke-width=".6"/><path d="M995.1 535.1L1019.5 535.0L1000.4 566.7Z" fill="#51515e" stroke="#51515e" stroke-width=".6"/><path d="M1019.5 535.0L1014.6 558.1L1000.4 566.7Z" fill="#545461" stroke="#545461" stroke-width=".6"/><path d="M1012.0 229.3L1039.5 231.2L1012.3 263.3Z" fill="#97979c" stroke="#97979c" stroke-width=".6"/><path d="M1039.5 231.2L1044.5 259.5L1012.3 263.3Z" fill="#98989d" stroke="#98989d" stroke-width=".6"/><path d="M1012.3 263.3L1044.5 259.5L1015.6 275.9Z" fill="#86868d" stroke="#86868d" stroke-width=".6"/><path d="M1044.5 259.5L1047.5 284.8L1015.6 275.9Z" fill="#7c7c84" stroke="#7c7c84" stroke-width=".6"/><path d="M1015.6 275.9L1047.5 284.8L1012.5 311.1Z" fill="#9c9ca1" stroke="#9c9ca1" stroke-width=".6"/><path d="M1047.5 284.8L1046.9 311.8L1012.5 311.1Z" fill="#8d8d93" stroke="#8d8d93" stroke-width=".6"/><path d="M1012.5 311.1L1046.9 311.8L1026.7 331.1Z" fill="#97979c" stroke="#97979c" stroke-width=".6"/><path d="M1046.9 311.8L1041.0 324.9L1026.7 331.1Z" fill="#787881" stroke="#787881" stroke-width=".6"/><path d="M1026.7 331.1L1041.0 324.9L1016.1 346.4Z" fill="#86868d" stroke="#86868d" stroke-width=".6"/><path d="M1041.0 324.9L1051.7 344.7L1016.1 346.4Z" fill="#8a8a90" stroke="#8a8a90" stroke-width=".6"/><path d="M1016.1 346.4L1051.7 344.7L1016.3 373.3Z" fill="#797981" stroke="#797981" stroke-width=".6"/><path d="M1051.7 344.7L1047.0 376.6L1016.3 373.3Z" fill="#83838a" stroke="#83838a" stroke-width=".6"/><path d="M1016.3 373.3L1047.0 376.6L1013.8 396.0Z" fill="#8f8f95" stroke="#8f8f95" stroke-width=".6"/><path d="M1047.0 376.6L1034.8 403.0L1013.8 396.0Z" fill="#939398" stroke="#939398" stroke-width=".6"/><path d="M1013.8 396.0L1034.8 403.0L1015.7 428.3Z" fill="#98989d" stroke="#98989d" stroke-width=".6"/><path d="M1034.8 403.0L1050.1 422.3L1015.7 428.3Z" fill="#73737c" stroke="#73737c" stroke-width=".6"/><path d="M1015.7 428.3L1050.1 422.3L1028.5 443.8Z" fill="#565663" stroke="#565663" stroke-width=".6"/><path d="M1050.1 422.3L1047.2 448.6L1028.5 443.8Z" fill="#62626d" stroke="#62626d" stroke-width=".6"/><path d="M1028.5 443.8L1047.2 448.6L1015.4 474.4Z" fill="#666671" stroke="#666671" stroke-width=".6"/><path d="M1047.2 448.6L1036.5 466.4L1015.4 474.4Z" fill="#5d5d69" stroke="#5d5d69" stroke-width=".6"/><path d="M1015.4 474.4L1036.5 466.4L1016.6 486.4Z" fill="#474756" stroke="#474756" stroke-width=".6"/><path d="M1036.5 466.4L1043.1 495.0L1016.6 486.4Z" fill="#5e5e6a" stroke="#5e5e6a" stroke-width=".6"/><path d="M1016.6 486.4L1043.1 495.0L1011.0 509.9Z" fill="#5d5d69" stroke="#5d5d69" stroke-width=".6"/><path d="M1043.1 495.0L1048.5 517.9L1011.0 509.9Z" fill="#5a5a66" stroke="#5a5a66" stroke-width=".6"/><path d="M1011.0 509.9L1048.5 517.9L1019.5 535.0Z" fill="#4e4e5c" stroke="#4e4e5c" stroke-width=".6"/><path d="M1048.5 517.9L1044.5 542.1L1019.5 535.0Z" fill="#565663" stroke="#565663" stroke-width=".6"/><path d="M1019.5 535.0L1044.5 542.1L1014.6 558.1Z" fill="#5b5b67" stroke="#5b5b67" stroke-width=".6"/><path d="M1044.5 542.1L1046.3 561.5L1014.6 558.1Z" fill="#4c4c5a" stroke="#4c4c5a" stroke-width=".6"/><path d="M1014.6 558.1L1046.3 561.5L1011.1 576.8Z" fill="#464654" stroke="#464654" stroke-width=".6"/><path d="M1039.5 231.2L1067.1 238.3L1044.5 259.5Z" fill="#929297" stroke="#929297" stroke-width=".6"/><path d="M1067.1 238.3L1068.3 262.3L1044.5 259.5Z" fill="#939398" stroke="#939398" stroke-width=".6"/><path d="M1044.5 259.5L1068.3 262.3L1047.5 284.8Z" fill="#8d8d93" stroke="#8d8d93" stroke-width=".6"/><path d="M1068.3 262.3L1065.8 273.1L1047.5 284.8Z" fill="#97979c" stroke="#97979c" stroke-width=".6"/><path d="M1047.5 284.8L1065.8 273.1L1046.9 311.8Z" fill="#86868c" stroke="#86868c" stroke-width=".6"/><path d="M1065.8 273.1L1071.4 309.5L1046.9 311.8Z" fill="#8b8b91" stroke="#8b8b91" stroke-width=".6"/><path d="M1046.9 311.8L1071.4 309.5L1041.0 324.9Z" fill="#87878e" stroke="#87878e" stroke-width=".6"/><path d="M1071.4 309.5L1066.1 328.6L1041.0 324.9Z" fill="#919196" stroke="#919196" stroke-width=".6"/><path d="M1041.0 324.9L1066.1 328.6L1051.7 344.7Z" fill="#9b9ba0" stroke="#9b9ba0" stroke-width=".6"/><path d="M1066.1 328.6L1068.9 343.2L1051.7 344.7Z" fill="#87878e" stroke="#87878e" stroke-width=".6"/><path d="M1051.7 344.7L1068.9 343.2L1047.0 376.6Z" fill="#9f9fa4" stroke="#9f9fa4" stroke-width=".6"/><path d="M1068.9 343.2L1070.3 369.5L1047.0 376.6Z" fill="#99999e" stroke="#99999e" stroke-width=".6"/><path d="M1047.0 376.6L1070.3 369.5L1034.8 403.0Z" fill="#909096" stroke="#909096" stroke-width=".6"/><path d="M1070.3 369.5L1058.3 392.8L1034.8 403.0Z" fill="#8e8e93" stroke="#8e8e93" stroke-width=".6"/><path d="M1034.8 403.0L1058.3 392.8L1050.1 422.3Z" fill="#9a9a9f" stroke="#9a9a9f" stroke-width=".6"/><path d="M1058.3 392.8L1070.1 414.7L1050.1 422.3Z" fill="#84848b" stroke="#84848b" stroke-width=".6"/><path d="M1050.1 422.3L1070.1 414.7L1047.2 448.6Z" fill="#84848b" stroke="#84848b" stroke-width=".6"/><path d="M1070.1 414.7L1070.3 451.6L1047.2 448.6Z" fill="#797981" stroke="#797981" stroke-width=".6"/><path d="M1047.2 448.6L1070.3 451.6L1036.5 466.4Z" fill="#89898f" stroke="#89898f" stroke-width=".6"/><path d="M1070.3 451.6L1065.9 463.9L1036.5 466.4Z" fill="#929298" stroke="#929298" stroke-width=".6"/><path d="M1036.5 466.4L1065.9 463.9L1043.1 495.0Z" fill="#84848b" stroke="#84848b" stroke-width=".6"/><path d="M1065.9 463.9L1065.6 492.3L1043.1 495.0Z" fill="#828289" stroke="#828289" stroke-width=".6"/><path d="M1043.1 495.0L1065.6 492.3L1048.5 517.9Z" fill="#7a7a82" stroke="#7a7a82" stroke-width=".6"/><path d="M1065.6 492.3L1070.8 514.1L1048.5 517.9Z" fill="#7e7e86" stroke="#7e7e86" stroke-width=".6"/><path d="M1048.5 517.9L1070.8 514.1L1044.5 542.1Z" fill="#6c6c76" stroke="#6c6c76" stroke-width=".6"/><path d="M1070.8 514.1L1068.6 527.4L1044.5 542.1Z" fill="#87878d" stroke="#87878d" stroke-width=".6"/><path d="M1044.5 542.1L1068.6 527.4L1046.3 561.5Z" fill="#76767f" stroke="#76767f" stroke-width=".6"/><path d="M1068.6 527.4L1059.7 553.6L1046.3 561.5Z" fill="#6e6e78" stroke="#6e6e78" stroke-width=".6"/><path d="M1046.3 561.5L1059.7 553.6L1038.1 572.6Z" fill="#71717a" stroke="#71717a" stroke-width=".6"/><path d="M1059.7 553.6L1070.4 577.5L1038.1 572.6Z" fill="#70707a" stroke="#70707a" stroke-width=".6"/><path d="M1067.1 238.3L1092.1 239.5L1068.3 262.3Z" fill="#98989d" stroke="#98989d" stroke-width=".6"/><path d="M1092.1 239.5L1092.2 255.2L1068.3 262.3Z" fill="#9a9a9f" stroke="#9a9a9f" stroke-width=".6"/><path d="M1068.3 262.3L1092.2 255.2L1065.8 273.1Z" fill="#7e7e86" stroke="#7e7e86" stroke-width=".6"/><path d="M1092.2 255.2L1089.3 281.4L1065.8 273.1Z" fill="#97979c" stroke="#97979c" stroke-width=".6"/><path d="M1065.8 273.1L1089.3 281.4L1071.4 309.5Z" fill="#96969b" stroke="#96969b" stroke-width=".6"/><path d="M1089.3 281.4L1088.4 298.1L1071.4 309.5Z" fill="#85858c" stroke="#85858c" stroke-width=".6"/><path d="M1071.4 309.5L1088.4 298.1L1066.1 328.6Z" fill="#7b7b83" stroke="#7b7b83" stroke-width=".6"/><path d="M1088.4 298.1L1096.1 322.6L1066.1 328.6Z" fill="#82828a" stroke="#82828a" stroke-width=".6"/><path d="M1066.1 328.6L1096.1 322.6L1068.9 343.2Z" fill="#83838a" stroke="#83838a" stroke-width=".6"/><path d="M1096.1 322.6L1097.6 358.9L1068.9 343.2Z" fill="#8d8d93" stroke="#8d8d93" stroke-width=".6"/><path d="M1068.9 343.2L1097.6 358.9L1070.3 369.5Z" fill="#85858c" stroke="#85858c" stroke-width=".6"/><path d="M1097.6 358.9L1080.3 373.3L1070.3 369.5Z" fill="#72727b" stroke="#72727b" stroke-width=".6"/><path d="M1070.3 369.5L1080.3 373.3L1058.3 392.8Z" fill="#8a8a91" stroke="#8a8a91" stroke-width=".6"/><path d="M1080.3 373.3L1094.8 405.4L1058.3 392.8Z" fill="#76767f" stroke="#76767f" stroke-width=".6"/><path d="M1058.3 392.8L1094.8 405.4L1070.1 414.7Z" fill="#909096" stroke="#909096" stroke-width=".6"/><path d="M1094.8 405.4L1088.1 415.8L1070.1 414.7Z" fill="#797981" stroke="#797981" stroke-width=".6"/><path d="M1070.1 414.7L1088.1 415.8L1070.3 451.6Z" fill="#7e7e85" stroke="#7e7e85" stroke-width=".6"/><path d="M1088.1 415.8L1083.8 451.0L1070.3 451.6Z" fill="#7b7b83" stroke="#7b7b83" stroke-width=".6"/><path d="M1070.3 451.6L1083.8 451.0L1065.9 463.9Z" fill="#7e7e86" stroke="#7e7e86" stroke-width=".6"/><path d="M1083.8 451.0L1083.8 467.5L1065.9 463.9Z" fill="#929297" stroke="#929297" stroke-width=".6"/><path d="M1065.9 463.9L1083.8 467.5L1065.6 492.3Z" fill="#87878e" stroke="#87878e" stroke-width=".6"/><path d="M1083.8 467.5L1082.6 489.4L1065.6 492.3Z" fill="#84848b" stroke="#84848b" stroke-width=".6"/><path d="M1065.6 492.3L1082.6 489.4L1070.8 514.1Z" fill="#808088" stroke="#808088" stroke-width=".6"/><path d="M1082.6 489.4L1097.1 505.4L1070.8 514.1Z" fill="#6b6b75" stroke="#6b6b75" stroke-width=".6"/><path d="M1070.8 514.1L1097.1 505.4L1068.6 527.4Z" fill="#76767f" stroke="#76767f" stroke-width=".6"/><path d="M1097.1 505.4L1094.8 535.2L1068.6 527.4Z" fill="#75757e" stroke="#75757e" stroke-width=".6"/><path d="M1068.6 527.4L1094.8 535.2L1059.7 553.6Z" fill="#707079" stroke="#707079" stroke-width=".6"/><path d="M1094.8 535.2L1096.0 561.7L1059.7 553.6Z" fill="#808087" stroke="#808087" stroke-width=".6"/><path d="M1059.7 553.6L1096.0 561.7L1070.4 577.5Z" fill="#71717a" stroke="#71717a" stroke-width=".6"/><path d="M1092.1 239.5L1111.1 232.4L1092.2 255.2Z" fill="#87878d" stroke="#87878d" stroke-width=".6"/><path d="M1111.1 232.4L1105.5 256.2L1092.2 255.2Z" fill="#83838a" stroke="#83838a" stroke-width=".6"/><path d="M1092.2 255.2L1105.5 256.2L1089.3 281.4Z" fill="#77777f" stroke="#77777f" stroke-width=".6"/><path d="M1105.5 256.2L1108.7 288.1L1089.3 281.4Z" fill="#939399" stroke="#939399" stroke-width=".6"/><path d="M1089.3 281.4L1108.7 288.1L1088.4 298.1Z" fill="#9b9ba0" stroke="#9b9ba0" stroke-width=".6"/><path d="M1108.7 288.1L1103.0 309.5L1088.4 298.1Z" fill="#8d8d93" stroke="#8d8d93" stroke-width=".6"/><path d="M1088.4 298.1L1103.0 309.5L1096.1 322.6Z" fill="#808088" stroke="#808088" stroke-width=".6"/><path d="M1103.0 309.5L1118.1 321.2L1096.1 322.6Z" fill="#6d6d77" stroke="#6d6d77" stroke-width=".6"/><path d="M1096.1 322.6L1118.1 321.2L1097.6 358.9Z" fill="#8c8c92" stroke="#8c8c92" stroke-width=".6"/><path d="M1118.1 321.2L1119.7 354.8L1097.6 358.9Z" fill="#97979c" stroke="#97979c" stroke-width=".6"/><path d="M1097.6 358.9L1119.7 354.8L1080.3 373.3Z" fill="#8c8c92" stroke="#8c8c92" stroke-width=".6"/><path d="M1119.7 354.8L1119.2 370.2L1080.3 373.3Z" fill="#929298" stroke="#929298" stroke-width=".6"/><path d="M1080.3 373.3L1119.2 370.2L1094.8 405.4Z" fill="#98989d" stroke="#98989d" stroke-width=".6"/><path d="M1119.2 370.2L1109.7 395.1L1094.8 405.4Z" fill="#939399" stroke="#939399" stroke-width=".6"/><path d="M1094.8 405.4L1109.7 395.1L1088.1 415.8Z" fill="#818189" stroke="#818189" stroke-width=".6"/><path d="M1109.7 395.1L1121.0 421.6L1088.1 415.8Z" fill="#929297" stroke="#929297" stroke-width=".6"/><path d="M1088.1 415.8L1121.0 421.6L1083.8 451.0Z" fill="#8e8e94" stroke="#8e8e94" stroke-width=".6"/><path d="M1121.0 421.6L1109.5 441.7L1083.8 451.0Z" fill="#74747d" stroke="#74747d" stroke-width=".6"/><path d="M1083.8 451.0L1109.5 441.7L1083.8 467.5Z" fill="#7f7f87" stroke="#7f7f87" stroke-width=".6"/><path d="M1109.5 441.7L1108.0 457.9L1083.8 467.5Z" fill="#74747d" stroke="#74747d" stroke-width=".6"/><path d="M1083.8 467.5L1108.0 457.9L1082.6 489.4Z" fill="#7d7d85" stroke="#7d7d85" stroke-width=".6"/><path d="M1108.0 457.9L1104.8 495.0L1082.6 489.4Z" fill="#84848b" stroke="#84848b" stroke-width=".6"/><path d="M1082.6 489.4L1104.8 495.0L1097.1 505.4Z" fill="#71717a" stroke="#71717a" stroke-width=".6"/><path d="M1104.8 495.0L1108.1 519.8L1097.1 505.4Z" fill="#666670" stroke="#666670" stroke-width=".6"/><path d="M1097.1 505.4L1108.1 519.8L1094.8 535.2Z" fill="#8a8a90" stroke="#8a8a90" stroke-width=".6"/><path d="M1108.1 519.8L1107.5 530.8L1094.8 535.2Z" fill="#7f7f87" stroke="#7f7f87" stroke-width=".6"/><path d="M1094.8 535.2L1107.5 530.8L1096.0 561.7Z" fill="#8b8b91" stroke="#8b8b91" stroke-width=".6"/><path d="M1107.5 530.8L1112.2 552.4L1096.0 561.7Z" fill="#6c6c76" stroke="#6c6c76" stroke-width=".6"/><path d="M1096.0 561.7L1112.2 552.4L1084.2 588.2Z" fill="#85858c" stroke="#85858c" stroke-width=".6"/><path d="M1111.1 232.4L1142.9 236.9L1105.5 256.2Z" fill="#a5a5aa" stroke="#a5a5aa" stroke-width=".6"/><path d="M1142.9 236.9L1139.0 250.9L1105.5 256.2Z" fill="#a4a4a9" stroke="#a4a4a9" stroke-width=".6"/><path d="M1105.5 256.2L1139.0 250.9L1108.7 288.1Z" fill="#8b8b91" stroke="#8b8b91" stroke-width=".6"/><path d="M1139.0 250.9L1139.2 281.1L1108.7 288.1Z" fill="#909095" stroke="#909095" stroke-width=".6"/><path d="M1108.7 288.1L1139.2 281.1L1103.0 309.5Z" fill="#8a8a91" stroke="#8a8a91" stroke-width=".6"/><path d="M1139.2 281.1L1139.5 307.6L1103.0 309.5Z" fill="#97979c" stroke="#97979c" stroke-width=".6"/><path d="M1103.0 309.5L1139.5 307.6L1118.1 321.2Z" fill="#96969b" stroke="#96969b" stroke-width=".6"/><path d="M1139.5 307.6L1131.2 319.9L1118.1 321.2Z" fill="#8c8c92" stroke="#8c8c92" stroke-width=".6"/><path d="M1118.1 321.2L1131.2 319.9L1119.7 354.8Z" fill="#7b7b83" stroke="#7b7b83" stroke-width=".6"/><path d="M1131.2 319.9L1142.7 344.3L1119.7 354.8Z" fill="#929297" stroke="#929297" stroke-width=".6"/><path d="M1119.7 354.8L1142.7 344.3L1119.2 370.2Z" fill="#808088" stroke="#808088" stroke-width=".6"/><path d="M1142.7 344.3L1134.5 371.2L1119.2 370.2Z" fill="#84848c" stroke="#84848c" stroke-width=".6"/><path d="M1119.2 370.2L1134.5 371.2L1109.7 395.1Z" fill="#898990" stroke="#898990" stroke-width=".6"/><path d="M1134.5 371.2L1131.4 401.3L1109.7 395.1Z" fill="#929298" stroke="#929298" stroke-width=".6"/><path d="M1109.7 395.1L1131.4 401.3L1121.0 421.6Z" fill="#939398" stroke="#939398" stroke-width=".6"/><path d="M1131.4 401.3L1143.6 415.7L1121.0 421.6Z" fill="#787881" stroke="#787881" stroke-width=".6"/><path d="M1121.0 421.6L1143.6 415.7L1109.5 441.7Z" fill="#898990" stroke="#898990" stroke-width=".6"/><path d="M1143.6 415.7L1137.8 439.4L1109.5 441.7Z" fill="#98989d" stroke="#98989d" stroke-width=".6"/><path d="M1109.5 441.7L1137.8 439.4L1108.0 457.9Z" fill="#7e7e86" stroke="#7e7e86" stroke-width=".6"/><path d="M1137.8 439.4L1136.0 464.1L1108.0 457.9Z" fill="#89898f" stroke="#89898f" stroke-width=".6"/><path d="M1108.0 457.9L1136.0 464.1L1104.8 495.0Z" fill="#8b8b91" stroke="#8b8b91" stroke-width=".6"/><path d="M1136.0 464.1L1129.0 482.9L1104.8 495.0Z" fill="#8b8b92" stroke="#8b8b92" stroke-width=".6"/><path d="M1104.8 495.0L1129.0 482.9L1108.1 519.8Z" fill="#82828a" stroke="#82828a" stroke-width=".6"/><path d="M1129.0 482.9L1129.7 519.3L1108.1 519.8Z" fill="#6e6e77" stroke="#6e6e77" stroke-width=".6"/><path d="M1108.1 519.8L1129.7 519.3L1107.5 530.8Z" fill="#6d6d77" stroke="#6d6d77" stroke-width=".6"/><path d="M1129.7 519.3L1134.9 530.0L1107.5 530.8Z" fill="#7e7e86" stroke="#7e7e86" stroke-width=".6"/><path d="M1107.5 530.8L1134.9 530.0L1112.2 552.4Z" fill="#7f7f87" stroke="#7f7f87" stroke-width=".6"/><path d="M1134.9 530.0L1142.3 566.9L1112.2 552.4Z" fill="#96969b" stroke="#96969b" stroke-width=".6"/><path d="M1112.2 552.4L1142.3 566.9L1109.7 589.2Z" fill="#707079" stroke="#707079" stroke-width=".6"/><path d="M1142.9 236.9L1153.3 231.7L1139.0 250.9Z" fill="#9b9ba0" stroke="#9b9ba0" stroke-width=".6"/><path d="M1153.3 231.7L1159.3 266.0L1139.0 250.9Z" fill="#96969b" stroke="#96969b" stroke-width=".6"/><path d="M1139.0 250.9L1159.3 266.0L1139.2 281.1Z" fill="#7b7b83" stroke="#7b7b83" stroke-width=".6"/><path d="M1159.3 266.0L1162.5 280.4L1139.2 281.1Z" fill="#84848b" stroke="#84848b" stroke-width=".6"/><path d="M1139.2 281.1L1162.5 280.4L1139.5 307.6Z" fill="#8f8f95" stroke="#8f8f95" stroke-width=".6"/><path d="M1162.5 280.4L1156.4 305.4L1139.5 307.6Z" fill="#8c8c92" stroke="#8c8c92" stroke-width=".6"/><path d="M1139.5 307.6L1156.4 305.4L1131.2 319.9Z" fill="#898990" stroke="#898990" stroke-width=".6"/><path d="M1156.4 305.4L1155.8 325.1L1131.2 319.9Z" fill="#909096" stroke="#909096" stroke-width=".6"/><path d="M1131.2 319.9L1155.8 325.1L1142.7 344.3Z" fill="#818189" stroke="#818189" stroke-width=".6"/><path d="M1155.8 325.1L1150.1 347.0L1142.7 344.3Z" fill="#88888f" stroke="#88888f" stroke-width=".6"/><path d="M1142.7 344.3L1150.1 347.0L1134.5 371.2Z" fill="#72727c" stroke="#72727c" stroke-width=".6"/><path d="M1150.1 347.0L1166.4 367.3L1134.5 371.2Z" fill="#6b6b75" stroke="#6b6b75" stroke-width=".6"/><path d="M1134.5 371.2L1166.4 367.3L1131.4 401.3Z" fill="#6e6e78" stroke="#6e6e78" stroke-width=".6"/><path d="M1166.4 367.3L1158.1 399.3L1131.4 401.3Z" fill="#5d5d69" stroke="#5d5d69" stroke-width=".6"/><path d="M1131.4 401.3L1158.1 399.3L1143.6 415.7Z" fill="#72727b" stroke="#72727b" stroke-width=".6"/><path d="M1158.1 399.3L1164.5 414.9L1143.6 415.7Z" fill="#83838a" stroke="#83838a" stroke-width=".6"/><path d="M1143.6 415.7L1164.5 414.9L1137.8 439.4Z" fill="#7a7a82" stroke="#7a7a82" stroke-width=".6"/><path d="M1164.5 414.9L1153.9 438.5L1137.8 439.4Z" fill="#7d7d85" stroke="#7d7d85" stroke-width=".6"/><path d="M1137.8 439.4L1153.9 438.5L1136.0 464.1Z" fill="#8c8c92" stroke="#8c8c92" stroke-width=".6"/><path d="M1153.9 438.5L1156.2 465.0L1136.0 464.1Z" fill="#808087" stroke="#808087" stroke-width=".6"/><path d="M1136.0 464.1L1156.2 465.0L1129.0 482.9Z" fill="#8a8a90" stroke="#8a8a90" stroke-width=".6"/><path d="M1156.2 465.0L1166.2 495.3L1129.0 482.9Z" fill="#6f6f79" stroke="#6f6f79" stroke-width=".6"/><path d="M1129.0 482.9L1166.2 495.3L1129.7 519.3Z" fill="#83838b" stroke="#83838b" stroke-width=".6"/><path d="M1166.2 495.3L1164.7 503.4L1129.7 519.3Z" fill="#77777f" stroke="#77777f" stroke-width=".6"/><path d="M1129.7 519.3L1164.7 503.4L1134.9 530.0Z" fill="#73737c" stroke="#73737c" stroke-width=".6"/><path d="M1164.7 503.4L1149.6 538.8L1134.9 530.0Z" fill="#8f8f95" stroke="#8f8f95" stroke-width=".6"/><path d="M1134.9 530.0L1149.6 538.8L1142.3 566.9Z" fill="#71717a" stroke="#71717a" stroke-width=".6"/><path d="M1149.6 538.8L1165.1 557.5L1142.3 566.9Z" fill="#8d8d93" stroke="#8d8d93" stroke-width=".6"/><path d="M1142.3 566.9L1165.1 557.5L1134.1 574.5Z" fill="#808088" stroke="#808088" stroke-width=".6"/><path d="M1165.1 557.5L1159.6 572.0L1134.1 574.5Z" fill="#898990" stroke="#898990" stroke-width=".6"/><path d="M1153.3 231.7L1189.5 231.5L1159.3 266.0Z" fill="#84848b" stroke="#84848b" stroke-width=".6"/><path d="M1189.5 231.5L1174.0 252.8L1159.3 266.0Z" fill="#9b9ba0" stroke="#9b9ba0" stroke-width=".6"/><path d="M1159.3 266.0L1174.0 252.8L1162.5 280.4Z" fill="#9d9da2" stroke="#9d9da2" stroke-width=".6"/><path d="M1174.0 252.8L1181.4 285.3L1162.5 280.4Z" fill="#8e8e94" stroke="#8e8e94" stroke-width=".6"/><path d="M1162.5 280.4L1181.4 285.3L1156.4 305.4Z" fill="#99999e" stroke="#99999e" stroke-width=".6"/><path d="M1181.4 285.3L1188.9 309.0L1156.4 305.4Z" fill="#bababf" stroke="#bababf" stroke-width=".6"/><path d="M1156.4 305.4L1188.9 309.0L1155.8 325.1Z" fill="#919197" stroke="#919197" stroke-width=".6"/><path d="M1188.9 309.0L1183.7 332.8L1155.8 325.1Z" fill="#86868d" stroke="#86868d" stroke-width=".6"/><path d="M1155.8 325.1L1183.7 332.8L1150.1 347.0Z" fill="#83838a" stroke="#83838a" stroke-width=".6"/><path d="M1183.7 332.8L1180.2 351.9L1150.1 347.0Z" fill="#8e8e94" stroke="#8e8e94" stroke-width=".6"/><path d="M1150.1 347.0L1180.2 351.9L1166.4 367.3Z" fill="#82828a" stroke="#82828a" stroke-width=".6"/><path d="M1180.2 351.9L1172.7 379.1L1166.4 367.3Z" fill="#84848b" stroke="#84848b" stroke-width=".6"/><path d="M1166.4 367.3L1172.7 379.1L1158.1 399.3Z" fill="#87878e" stroke="#87878e" stroke-width=".6"/><path d="M1172.7 379.1L1176.2 404.6L1158.1 399.3Z" fill="#75757e" stroke="#75757e" stroke-width=".6"/><path d="M1158.1 399.3L1176.2 404.6L1164.5 414.9Z" fill="#7e7e86" stroke="#7e7e86" stroke-width=".6"/><path d="M1176.2 404.6L1183.6 416.5L1164.5 414.9Z" fill="#94949a" stroke="#94949a" stroke-width=".6"/><path d="M1164.5 414.9L1183.6 416.5L1153.9 438.5Z" fill="#76767f" stroke="#76767f" stroke-width=".6"/><path d="M1183.6 416.5L1174.3 438.5L1153.9 438.5Z" fill="#909096" stroke="#909096" stroke-width=".6"/><path d="M1153.9 438.5L1174.3 438.5L1156.2 465.0Z" fill="#98989d" stroke="#98989d" stroke-width=".6"/><path d="M1174.3 438.5L1183.5 469.6L1156.2 465.0Z" fill="#75757e" stroke="#75757e" stroke-width=".6"/><path d="M1156.2 465.0L1183.5 469.6L1166.2 495.3Z" fill="#72727b" stroke="#72727b" stroke-width=".6"/><path d="M1183.5 469.6L1174.0 481.3L1166.2 495.3Z" fill="#72727b" stroke="#72727b" stroke-width=".6"/><path d="M1166.2 495.3L1174.0 481.3L1164.7 503.4Z" fill="#696973" stroke="#696973" stroke-width=".6"/><path d="M1174.0 481.3L1181.4 513.5L1164.7 503.4Z" fill="#828289" stroke="#828289" stroke-width=".6"/><path d="M1164.7 503.4L1181.4 513.5L1149.6 538.8Z" fill="#676772" stroke="#676772" stroke-width=".6"/><path d="M1181.4 513.5L1179.0 530.0L1149.6 538.8Z" fill="#818188" stroke="#818188" stroke-width=".6"/><path d="M1149.6 538.8L1179.0 530.0L1165.1 557.5Z" fill="#8a8a91" stroke="#8a8a91" stroke-width=".6"/><path d="M1179.0 530.0L1182.8 549.2L1165.1 557.5Z" fill="#686873" stroke="#686873" stroke-width=".6"/><path d="M1165.1 557.5L1182.8 549.2L1159.6 572.0Z" fill="#76767f" stroke="#76767f" stroke-width=".6"/><path d="M1182.8 549.2L1177.4 580.3L1159.6 572.0Z" fill="#64646f" stroke="#64646f" stroke-width=".6"/><path d="M1189.5 231.5L1199.2 231.4L1174.0 252.8Z" fill="#97979c" stroke="#97979c" stroke-width=".6"/><path d="M1199.2 231.4L1212.3 262.7L1174.0 252.8Z" fill="#86868d" stroke="#86868d" stroke-width=".6"/><path d="M1174.0 252.8L1212.3 262.7L1181.4 285.3Z" fill="#8a8a91" stroke="#8a8a91" stroke-width=".6"/><path d="M1212.3 262.7L1200.5 273.4L1181.4 285.3Z" fill="#8e8e94" stroke="#8e8e94" stroke-width=".6"/><path d="M1181.4 285.3L1200.5 273.4L1188.9 309.0Z" fill="#a2a2a7" stroke="#a2a2a7" stroke-width=".6"/><path d="M1200.5 273.4L1204.0 308.1L1188.9 309.0Z" fill="#949499" stroke="#949499" stroke-width=".6"/><path d="M1188.9 309.0L1204.0 308.1L1183.7 332.8Z" fill="#8a8a90" stroke="#8a8a90" stroke-width=".6"/><path d="M1204.0 308.1L1202.6 323.6L1183.7 332.8Z" fill="#77777f" stroke="#77777f" stroke-width=".6"/><path d="M1183.7 332.8L1202.6 323.6L1180.2 351.9Z" fill="#8b8b91" stroke="#8b8b91" stroke-width=".6"/><path d="M1202.6 323.6L1207.0 358.7L1180.2 351.9Z" fill="#7c7c84" stroke="#7c7c84" stroke-width=".6"/><path d="M1180.2 351.9L1207.0 358.7L1172.7 379.1Z" fill="#898990" stroke="#898990" stroke-width=".6"/><path d="M1207.0 358.7L1199.1 365.6L1172.7 379.1Z" fill="#73737c" stroke="#73737c" stroke-width=".6"/><path d="M1172.7 379.1L1199.1 365.6L1176.2 404.6Z" fill="#828289" stroke="#828289" stroke-width=".6"/><path d="M1199.1 365.6L1201.1 395.6L1176.2 404.6Z" fill="#9c9ca1" stroke="#9c9ca1" stroke-width=".6"/><path d="M1176.2 404.6L1201.1 395.6L1183.6 416.5Z" fill="#87878e" stroke="#87878e" stroke-width=".6"/><path d="M1201.1 395.6L1207.3 414.6L1183.6 416.5Z" fill="#787881" stroke="#787881" stroke-width=".6"/><path d="M1183.6 416.5L1207.3 414.6L1174.3 438.5Z" fill="#88888f" stroke="#88888f" stroke-width=".6"/><path d="M1207.3 414.6L1209.3 447.3L1174.3 438.5Z" fill="#7a7a82" stroke="#7a7a82" stroke-width=".6"/><path d="M1174.3 438.5L1209.3 447.3L1183.5 469.6Z" fill="#72727b" stroke="#72727b" stroke-width=".6"/><path d="M1209.3 447.3L1204.1 460.7L1183.5 469.6Z" fill="#7b7b84" stroke="#7b7b84" stroke-width=".6"/><path d="M1183.5 469.6L1204.1 460.7L1174.0 481.3Z" fill="#86868d" stroke="#86868d" stroke-width=".6"/><path d="M1204.1 460.7L1212.5 485.6L1174.0 481.3Z" fill="#828289" stroke="#828289" stroke-width=".6"/><path d="M1174.0 481.3L1212.5 485.6L1181.4 513.5Z" fill="#7c7c84" stroke="#7c7c84" stroke-width=".6"/><path d="M1212.5 485.6L1209.8 507.2L1181.4 513.5Z" fill="#72727b" stroke="#72727b" stroke-width=".6"/><path d="M1181.4 513.5L1209.8 507.2L1179.0 530.0Z" fill="#707079" stroke="#707079" stroke-width=".6"/><path d="M1209.8 507.2L1199.0 539.7L1179.0 530.0Z" fill="#8a8a90" stroke="#8a8a90" stroke-width=".6"/><path d="M1179.0 530.0L1199.0 539.7L1182.8 549.2Z" fill="#7d7d85" stroke="#7d7d85" stroke-width=".6"/><path d="M1199.0 539.7L1200.3 566.1L1182.8 549.2Z" fill="#6f6f79" stroke="#6f6f79" stroke-width=".6"/><path d="M1182.8 549.2L1200.3 566.1L1177.4 580.3Z" fill="#62626d" stroke="#62626d" stroke-width=".6"/><path d="M1199.2 231.4L1220.6 234.1L1212.3 262.7Z" fill="#7f7f87" stroke="#7f7f87" stroke-width=".6"/><path d="M1220.6 234.1L1221.8 267.5L1212.3 262.7Z" fill="#939398" stroke="#939398" stroke-width=".6"/><path d="M1212.3 262.7L1221.8 267.5L1200.5 273.4Z" fill="#808088" stroke="#808088" stroke-width=".6"/><path d="M1221.8 267.5L1220.6 273.9L1200.5 273.4Z" fill="#8c8c92" stroke="#8c8c92" stroke-width=".6"/><path d="M1200.5 273.4L1220.6 273.9L1204.0 308.1Z" fill="#919197" stroke="#919197" stroke-width=".6"/><path d="M1220.6 273.9L1219.1 303.1L1204.0 308.1Z" fill="#8a8a91" stroke="#8a8a91" stroke-width=".6"/><path d="M1204.0 308.1L1219.1 303.1L1202.6 323.6Z" fill="#88888e" stroke="#88888e" stroke-width=".6"/><path d="M1219.1 303.1L1234.2 334.9L1202.6 323.6Z" fill="#535360" stroke="#535360" stroke-width=".6"/><path d="M1202.6 323.6L1234.2 334.9L1207.0 358.7Z" fill="#7e7e86" stroke="#7e7e86" stroke-width=".6"/><path d="M1234.2 334.9L1231.2 360.0L1207.0 358.7Z" fill="#86868c" stroke="#86868c" stroke-width=".6"/><path d="M1207.0 358.7L1231.2 360.0L1199.1 365.6Z" fill="#808088" stroke="#808088" stroke-width=".6"/><path d="M1231.2 360.0L1234.8 370.9L1199.1 365.6Z" fill="#7c7c84" stroke="#7c7c84" stroke-width=".6"/><path d="M1199.1 365.6L1234.8 370.9L1201.1 395.6Z" fill="#75757e" stroke="#75757e" stroke-width=".6"/><path d="M1234.8 370.9L1221.3 404.8L1201.1 395.6Z" fill="#6e6e78" stroke="#6e6e78" stroke-width=".6"/><path d="M1201.1 395.6L1221.3 404.8L1207.3 414.6Z" fill="#898990" stroke="#898990" stroke-width=".6"/><path d="M1221.3 404.8L1231.4 411.6L1207.3 414.6Z" fill="#7b7b84" stroke="#7b7b84" stroke-width=".6"/><path d="M1207.3 414.6L1231.4 411.6L1209.3 447.3Z" fill="#63636e" stroke="#63636e" stroke-width=".6"/><path d="M1231.4 411.6L1230.0 440.8L1209.3 447.3Z" fill="#75757e" stroke="#75757e" stroke-width=".6"/><path d="M1209.3 447.3L1230.0 440.8L1204.1 460.7Z" fill="#88888f" stroke="#88888f" stroke-width=".6"/><path d="M1230.0 440.8L1224.7 463.0L1204.1 460.7Z" fill="#666670" stroke="#666670" stroke-width=".6"/><path d="M1204.1 460.7L1224.7 463.0L1212.5 485.6Z" fill="#88888f" stroke="#88888f" stroke-width=".6"/><path d="M1224.7 463.0L1221.0 480.1L1212.5 485.6Z" fill="#5e5e69" stroke="#5e5e69" stroke-width=".6"/><path d="M1212.5 485.6L1221.0 480.1L1209.8 507.2Z" fill="#74747d" stroke="#74747d" stroke-width=".6"/><path d="M1221.0 480.1L1223.0 509.3L1209.8 507.2Z" fill="#666671" stroke="#666671" stroke-width=".6"/><path d="M1209.8 507.2L1223.0 509.3L1199.0 539.7Z" fill="#5e5e69" stroke="#5e5e69" stroke-width=".6"/><path d="M1223.0 509.3L1235.2 528.2L1199.0 539.7Z" fill="#64646f" stroke="#64646f" stroke-width=".6"/><path d="M1199.0 539.7L1235.2 528.2L1200.3 566.1Z" fill="#6f6f79" stroke="#6f6f79" stroke-width=".6"/><path d="M1235.2 528.2L1235.4 552.7L1200.3 566.1Z" fill="#545461" stroke="#545461" stroke-width=".6"/><path d="M1200.3 566.1L1235.4 552.7L1203.9 575.4Z" fill="#75757e" stroke="#75757e" stroke-width=".6"/><path d="M1241.9 212.5L1247.7 243.6L1220.6 234.1Z" fill="#818189" stroke="#818189" stroke-width=".6"/><path d="M1220.6 234.1L1247.7 243.6L1221.8 267.5Z" fill="#74747d" stroke="#74747d" stroke-width=".6"/><path d="M1247.7 243.6L1244.5 256.6L1221.8 267.5Z" fill="#86868d" stroke="#86868d" stroke-width=".6"/><path d="M1221.8 267.5L1244.5 256.6L1220.6 273.9Z" fill="#6a6a75" stroke="#6a6a75" stroke-width=".6"/><path d="M1244.5 256.6L1257.1 273.5L1220.6 273.9Z" fill="#696973" stroke="#696973" stroke-width=".6"/><path d="M1220.6 273.9L1257.1 273.5L1219.1 303.1Z" fill="#87878e" stroke="#87878e" stroke-width=".6"/><path d="M1257.1 273.5L1248.4 310.6L1219.1 303.1Z" fill="#7a7a82" stroke="#7a7a82" stroke-width=".6"/><path d="M1219.1 303.1L1248.4 310.6L1234.2 334.9Z" fill="#7b7b83" stroke="#7b7b83" stroke-width=".6"/><path d="M1248.4 310.6L1254.8 319.7L1234.2 334.9Z" fill="#666671" stroke="#666671" stroke-width=".6"/><path d="M1234.2 334.9L1254.8 319.7L1231.2 360.0Z" fill="#7c7c84" stroke="#7c7c84" stroke-width=".6"/><path d="M1254.8 319.7L1241.6 343.1L1231.2 360.0Z" fill="#76767f" stroke="#76767f" stroke-width=".6"/><path d="M1231.2 360.0L1241.6 343.1L1234.8 370.9Z" fill="#7a7a82" stroke="#7a7a82" stroke-width=".6"/><path d="M1241.6 343.1L1257.6 369.6L1234.8 370.9Z" fill="#73737c" stroke="#73737c" stroke-width=".6"/><path d="M1234.8 370.9L1257.6 369.6L1221.3 404.8Z" fill="#7f7f86" stroke="#7f7f86" stroke-width=".6"/><path d="M1257.6 369.6L1254.5 404.2L1221.3 404.8Z" fill="#6a6a74" stroke="#6a6a74" stroke-width=".6"/><path d="M1221.3 404.8L1254.5 404.2L1231.4 411.6Z" fill="#666670" stroke="#666670" stroke-width=".6"/><path d="M1254.5 404.2L1247.1 415.9L1231.4 411.6Z" fill="#60606b" stroke="#60606b" stroke-width=".6"/><path d="M1231.4 411.6L1247.1 415.9L1230.0 440.8Z" fill="#7c7c84" stroke="#7c7c84" stroke-width=".6"/><path d="M1247.1 415.9L1258.2 445.1L1230.0 440.8Z" fill="#676771" stroke="#676771" stroke-width=".6"/><path d="M1230.0 440.8L1258.2 445.1L1224.7 463.0Z" fill="#63636e" stroke="#63636e" stroke-width=".6"/><path d="M1258.2 445.1L1245.7 469.9L1224.7 463.0Z" fill="#63636e" stroke="#63636e" stroke-width=".6"/><path d="M1224.7 463.0L1245.7 469.9L1221.0 480.1Z" fill="#63636e" stroke="#63636e" stroke-width=".6"/><path d="M1245.7 469.9L1246.7 485.0L1221.0 480.1Z" fill="#5a5a66" stroke="#5a5a66" stroke-width=".6"/><path d="M1221.0 480.1L1246.7 485.0L1223.0 509.3Z" fill="#64646f" stroke="#64646f" stroke-width=".6"/><path d="M1246.7 485.0L1241.1 516.6L1223.0 509.3Z" fill="#5f5f6b" stroke="#5f5f6b" stroke-width=".6"/><path d="M1223.0 509.3L1241.1 516.6L1235.2 528.2Z" fill="#60606b" stroke="#60606b" stroke-width=".6"/><path d="M1241.1 516.6L1257.5 537.4L1235.2 528.2Z" fill="#5b5b67" stroke="#5b5b67" stroke-width=".6"/><path d="M1235.2 528.2L1257.5 537.4L1235.4 552.7Z" fill="#656570" stroke="#656570" stroke-width=".6"/><path d="M1257.5 537.4L1258.0 549.4L1235.4 552.7Z" fill="#5f5f6b" stroke="#5f5f6b" stroke-width=".6"/><path d="M1235.4 552.7L1258.0 549.4L1224.4 586.8Z" fill="#65656f" stroke="#65656f" stroke-width=".6"/><path d="M1247.7 243.6L1271.7 235.9L1244.5 256.6Z" fill="#7b7b83" stroke="#7b7b83" stroke-width=".6"/><path d="M1271.7 235.9L1280.7 253.3L1244.5 256.6Z" fill="#7c7c84" stroke="#7c7c84" stroke-width=".6"/><path d="M1244.5 256.6L1280.7 253.3L1257.1 273.5Z" fill="#5f5f6b" stroke="#5f5f6b" stroke-width=".6"/><path d="M1280.7 253.3L1278.4 286.3L1257.1 273.5Z" fill="#71717a" stroke="#71717a" stroke-width=".6"/><path d="M1257.1 273.5L1278.4 286.3L1248.4 310.6Z" fill="#6d6d77" stroke="#6d6d77" stroke-width=".6"/><path d="M1278.4 286.3L1278.8 309.9L1248.4 310.6Z" fill="#7e7e86" stroke="#7e7e86" stroke-width=".6"/><path d="M1248.4 310.6L1278.8 309.9L1254.8 319.7Z" fill="#63636e" stroke="#63636e" stroke-width=".6"/><path d="M1278.8 309.9L1274.9 324.9L1254.8 319.7Z" fill="#6d6d77" stroke="#6d6d77" stroke-width=".6"/><path d="M1254.8 319.7L1274.9 324.9L1241.6 343.1Z" fill="#71717a" stroke="#71717a" stroke-width=".6"/><path d="M1274.9 324.9L1269.8 348.5L1241.6 343.1Z" fill="#707079" stroke="#707079" stroke-width=".6"/><path d="M1241.6 343.1L1269.8 348.5L1257.6 369.6Z" fill="#7e7e86" stroke="#7e7e86" stroke-width=".6"/><path d="M1269.8 348.5L1278.1 366.4L1257.6 369.6Z" fill="#6e6e77" stroke="#6e6e77" stroke-width=".6"/><path d="M1257.6 369.6L1278.1 366.4L1254.5 404.2Z" fill="#7c7c84" stroke="#7c7c84" stroke-width=".6"/><path d="M1278.1 366.4L1267.6 401.6L1254.5 404.2Z" fill="#61616c" stroke="#61616c" stroke-width=".6"/><path d="M1254.5 404.2L1267.6 401.6L1247.1 415.9Z" fill="#5c5c68" stroke="#5c5c68" stroke-width=".6"/><path d="M1267.6 401.6L1268.5 412.2L1247.1 415.9Z" fill="#7d7d85" stroke="#7d7d85" stroke-width=".6"/><path d="M1247.1 415.9L1268.5 412.2L1258.2 445.1Z" fill="#74747d" stroke="#74747d" stroke-width=".6"/><path d="M1268.5 412.2L1264.6 443.9L1258.2 445.1Z" fill="#74747d" stroke="#74747d" stroke-width=".6"/><path d="M1258.2 445.1L1264.6 443.9L1245.7 469.9Z" fill="#6f6f79" stroke="#6f6f79" stroke-width=".6"/><path d="M1264.6 443.9L1269.9 474.6L1245.7 469.9Z" fill="#73737c" stroke="#73737c" stroke-width=".6"/><path d="M1245.7 469.9L1269.9 474.6L1246.7 485.0Z" fill="#5a5a66" stroke="#5a5a66" stroke-width=".6"/><path d="M1269.9 474.6L1279.9 497.8L1246.7 485.0Z" fill="#72727b" stroke="#72727b" stroke-width=".6"/><path d="M1246.7 485.0L1279.9 497.8L1241.1 516.6Z" fill="#61616c" stroke="#61616c" stroke-width=".6"/><path d="M1279.9 497.8L1268.8 504.5L1241.1 516.6Z" fill="#71717a" stroke="#71717a" stroke-width=".6"/><path d="M1241.1 516.6L1268.8 504.5L1257.5 537.4Z" fill="#666671" stroke="#666671" stroke-width=".6"/><path d="M1268.8 504.5L1265.7 535.0L1257.5 537.4Z" fill="#50505d" stroke="#50505d" stroke-width=".6"/><path d="M1257.5 537.4L1265.7 535.0L1258.0 549.4Z" fill="#565663" stroke="#565663" stroke-width=".6"/><path d="M1265.7 535.0L1276.8 557.0L1258.0 549.4Z" fill="#71717a" stroke="#71717a" stroke-width=".6"/><path d="M1258.0 549.4L1276.8 557.0L1245.2 580.6Z" fill="#62626d" stroke="#62626d" stroke-width=".6"/><path d="M1271.7 235.9L1299.0 229.2L1280.7 253.3Z" fill="#74747d" stroke="#74747d" stroke-width=".6"/><path d="M1299.0 229.2L1302.1 255.3L1280.7 253.3Z" fill="#7b7b83" stroke="#7b7b83" stroke-width=".6"/><path d="M1280.7 253.3L1302.1 255.3L1278.4 286.3Z" fill="#73737c" stroke="#73737c" stroke-width=".6"/><path d="M1302.1 255.3L1297.2 279.7L1278.4 286.3Z" fill="#71717a" stroke="#71717a" stroke-width=".6"/><path d="M1278.4 286.3L1297.2 279.7L1278.8 309.9Z" fill="#777780" stroke="#777780" stroke-width=".6"/><path d="M1297.2 279.7L1300.3 299.6L1278.8 309.9Z" fill="#777780" stroke="#777780" stroke-width=".6"/><path d="M1278.8 309.9L1300.3 299.6L1274.9 324.9Z" fill="#86868d" stroke="#86868d" stroke-width=".6"/><path d="M1300.3 299.6L1291.5 323.4L1274.9 324.9Z" fill="#75757e" stroke="#75757e" stroke-width=".6"/><path d="M1274.9 324.9L1291.5 323.4L1269.8 348.5Z" fill="#89898f" stroke="#89898f" stroke-width=".6"/><path d="M1291.5 323.4L1289.8 357.9L1269.8 348.5Z" fill="#87878e" stroke="#87878e" stroke-width=".6"/><path d="M1269.8 348.5L1289.8 357.9L1278.1 366.4Z" fill="#86868c" stroke="#86868c" stroke-width=".6"/><path d="M1289.8 357.9L1297.4 370.9L1278.1 366.4Z" fill="#7e7e86" stroke="#7e7e86" stroke-width=".6"/><path d="M1278.1 366.4L1297.4 370.9L1267.6 401.6Z" fill="#73737c" stroke="#73737c" stroke-width=".6"/><path d="M1297.4 370.9L1294.1 405.9L1267.6 401.6Z" fill="#72727c" stroke="#72727c" stroke-width=".6"/><path d="M1267.6 401.6L1294.1 405.9L1268.5 412.2Z" fill="#6f6f78" stroke="#6f6f78" stroke-width=".6"/><path d="M1294.1 405.9L1296.1 415.2L1268.5 412.2Z" fill="#686872" stroke="#686872" stroke-width=".6"/><path d="M1268.5 412.2L1296.1 415.2L1264.6 443.9Z" fill="#6f6f78" stroke="#6f6f78" stroke-width=".6"/><path d="M1296.1 415.2L1301.6 445.8L1264.6 443.9Z" fill="#686872" stroke="#686872" stroke-width=".6"/><path d="M1264.6 443.9L1301.6 445.8L1269.9 474.6Z" fill="#808087" stroke="#808087" stroke-width=".6"/><path d="M1301.6 445.8L1304.8 458.8L1269.9 474.6Z" fill="#73737c" stroke="#73737c" stroke-width=".6"/><path d="M1269.9 474.6L1304.8 458.8L1279.9 497.8Z" fill="#63636e" stroke="#63636e" stroke-width=".6"/><path d="M1304.8 458.8L1295.5 494.7L1279.9 497.8Z" fill="#52525f" stroke="#52525f" stroke-width=".6"/><path d="M1279.9 497.8L1295.5 494.7L1268.8 504.5Z" fill="#666671" stroke="#666671" stroke-width=".6"/><path d="M1295.5 494.7L1302.1 519.5L1268.8 504.5Z" fill="#62626d" stroke="#62626d" stroke-width=".6"/><path d="M1268.8 504.5L1302.1 519.5L1265.7 535.0Z" fill="#5a5a66" stroke="#5a5a66" stroke-width=".6"/><path d="M1302.1 519.5L1287.7 531.3L1265.7 535.0Z" fill="#595965" stroke="#595965" stroke-width=".6"/><path d="M1265.7 535.0L1287.7 531.3L1276.8 557.0Z" fill="#4c4c5a" stroke="#4c4c5a" stroke-width=".6"/><path d="M1287.7 531.3L1289.1 552.4L1276.8 557.0Z" fill="#6a6a75" stroke="#6a6a75" stroke-width=".6"/><path d="M1276.8 557.0L1289.1 552.4L1268.2 579.5Z" fill="#63636e" stroke="#63636e" stroke-width=".6"/><path d="M1299.0 229.2L1314.7 241.0L1302.1 255.3Z" fill="#95959a" stroke="#95959a" stroke-width=".6"/><path d="M1314.7 241.0L1327.0 251.9L1302.1 255.3Z" fill="#787880" stroke="#787880" stroke-width=".6"/><path d="M1302.1 255.3L1327.0 251.9L1297.2 279.7Z" fill="#76767f" stroke="#76767f" stroke-width=".6"/><path d="M1327.0 251.9L1320.7 284.2L1297.2 279.7Z" fill="#87878e" stroke="#87878e" stroke-width=".6"/><path d="M1297.2 279.7L1320.7 284.2L1300.3 299.6Z" fill="#787880" stroke="#787880" stroke-width=".6"/><path d="M1320.7 284.2L1313.9 302.6L1300.3 299.6Z" fill="#787880" stroke="#787880" stroke-width=".6"/><path d="M1300.3 299.6L1313.9 302.6L1291.5 323.4Z" fill="#71717a" stroke="#71717a" stroke-width=".6"/><path d="M1313.9 302.6L1312.5 322.7L1291.5 323.4Z" fill="#6e6e78" stroke="#6e6e78" stroke-width=".6"/><path d="M1291.5 323.4L1312.5 322.7L1289.8 357.9Z" fill="#84848b" stroke="#84848b" stroke-width=".6"/><path d="M1312.5 322.7L1314.6 352.8L1289.8 357.9Z" fill="#7e7e86" stroke="#7e7e86" stroke-width=".6"/><path d="M1289.8 357.9L1314.6 352.8L1297.4 370.9Z" fill="#85858c" stroke="#85858c" stroke-width=".6"/><path d="M1314.6 352.8L1321.7 368.7L1297.4 370.9Z" fill="#6e6e78" stroke="#6e6e78" stroke-width=".6"/><path d="M1297.4 370.9L1321.7 368.7L1294.1 405.9Z" fill="#72727b" stroke="#72727b" stroke-width=".6"/><path d="M1321.7 368.7L1310.2 393.9L1294.1 405.9Z" fill="#676772" stroke="#676772" stroke-width=".6"/><path d="M1294.1 405.9L1310.2 393.9L1296.1 415.2Z" fill="#7b7b83" stroke="#7b7b83" stroke-width=".6"/><path d="M1310.2 393.9L1322.2 414.3L1296.1 415.2Z" fill="#61616c" stroke="#61616c" stroke-width=".6"/><path d="M1296.1 415.2L1322.2 414.3L1301.6 445.8Z" fill="#75757e" stroke="#75757e" stroke-width=".6"/><path d="M1322.2 414.3L1315.6 437.7L1301.6 445.8Z" fill="#7b7b83" stroke="#7b7b83" stroke-width=".6"/><path d="M1301.6 445.8L1315.6 437.7L1304.8 458.8Z" fill="#7e7e86" stroke="#7e7e86" stroke-width=".6"/><path d="M1315.6 437.7L1324.3 466.9L1304.8 458.8Z" fill="#63636e" stroke="#63636e" stroke-width=".6"/><path d="M1304.8 458.8L1324.3 466.9L1295.5 494.7Z" fill="#74747d" stroke="#74747d" stroke-width=".6"/><path d="M1324.3 466.9L1311.1 481.8L1295.5 494.7Z" fill="#60606b" stroke="#60606b" stroke-width=".6"/><path d="M1295.5 494.7L1311.1 481.8L1302.1 519.5Z" fill="#5e5e6a" stroke="#5e5e6a" stroke-width=".6"/><path d="M1311.1 481.8L1317.1 512.9L1302.1 519.5Z" fill="#585864" stroke="#585864" stroke-width=".6"/><path d="M1302.1 519.5L1317.1 512.9L1287.7 531.3Z" fill="#72727b" stroke="#72727b" stroke-width=".6"/><path d="M1317.1 512.9L1321.5 527.6L1287.7 531.3Z" fill="#777780" stroke="#777780" stroke-width=".6"/><path d="M1287.7 531.3L1321.5 527.6L1289.1 552.4Z" fill="#5e5e6a" stroke="#5e5e6a" stroke-width=".6"/><path d="M1321.5 527.6L1312.9 561.5L1289.1 552.4Z" fill="#5c5c68" stroke="#5c5c68" stroke-width=".6"/><path d="M1289.1 552.4L1312.9 561.5L1304.5 582.5Z" fill="#5f5f6b" stroke="#5f5f6b" stroke-width=".6"/><path d="M1314.7 241.0L1339.4 234.5L1327.0 251.9Z" fill="#949499" stroke="#949499" stroke-width=".6"/><path d="M1339.4 234.5L1348.6 267.9L1327.0 251.9Z" fill="#83838a" stroke="#83838a" stroke-width=".6"/><path d="M1327.0 251.9L1348.6 267.9L1320.7 284.2Z" fill="#71717a" stroke="#71717a" stroke-width=".6"/><path d="M1348.6 267.9L1339.5 276.5L1320.7 284.2Z" fill="#63636e" stroke="#63636e" stroke-width=".6"/><path d="M1320.7 284.2L1339.5 276.5L1313.9 302.6Z" fill="#6f6f78" stroke="#6f6f78" stroke-width=".6"/><path d="M1339.5 276.5L1346.1 299.7L1313.9 302.6Z" fill="#83838a" stroke="#83838a" stroke-width=".6"/><path d="M1313.9 302.6L1346.1 299.7L1312.5 322.7Z" fill="#8a8a90" stroke="#8a8a90" stroke-width=".6"/><path d="M1346.1 299.7L1333.1 335.2L1312.5 322.7Z" fill="#72727b" stroke="#72727b" stroke-width=".6"/><path d="M1312.5 322.7L1333.1 335.2L1314.6 352.8Z" fill="#6c6c76" stroke="#6c6c76" stroke-width=".6"/><path d="M1333.1 335.2L1340.6 356.8L1314.6 352.8Z" fill="#6d6d77" stroke="#6d6d77" stroke-width=".6"/><path d="M1314.6 352.8L1340.6 356.8L1321.7 368.7Z" fill="#5e5e69" stroke="#5e5e69" stroke-width=".6"/><path d="M1340.6 356.8L1340.3 380.9L1321.7 368.7Z" fill="#7c7c84" stroke="#7c7c84" stroke-width=".6"/><path d="M1321.7 368.7L1340.3 380.9L1310.2 393.9Z" fill="#656570" stroke="#656570" stroke-width=".6"/><path d="M1340.3 380.9L1341.3 390.9L1310.2 393.9Z" fill="#7d7d85" stroke="#7d7d85" stroke-width=".6"/><path d="M1310.2 393.9L1341.3 390.9L1322.2 414.3Z" fill="#5e5e69" stroke="#5e5e69" stroke-width=".6"/><path d="M1341.3 390.9L1333.3 420.9L1322.2 414.3Z" fill="#62626d" stroke="#62626d" stroke-width=".6"/><path d="M1322.2 414.3L1333.3 420.9L1315.6 437.7Z" fill="#72727c" stroke="#72727c" stroke-width=".6"/><path d="M1333.3 420.9L1344.5 450.4L1315.6 437.7Z" fill="#666671" stroke="#666671" stroke-width=".6"/><path d="M1315.6 437.7L1344.5 450.4L1324.3 466.9Z" fill="#77777f" stroke="#77777f" stroke-width=".6"/><path d="M1344.5 450.4L1334.6 468.2L1324.3 466.9Z" fill="#6e6e77" stroke="#6e6e77" stroke-width=".6"/><path d="M1324.3 466.9L1334.6 468.2L1311.1 481.8Z" fill="#5b5b67" stroke="#5b5b67" stroke-width=".6"/><path d="M1334.6 468.2L1339.7 489.1L1311.1 481.8Z" fill="#6e6e78" stroke="#6e6e78" stroke-width=".6"/><path d="M1311.1 481.8L1339.7 489.1L1317.1 512.9Z" fill="#70707a" stroke="#70707a" stroke-width=".6"/><path d="M1339.7 489.1L1335.6 508.1L1317.1 512.9Z" fill="#51515e" stroke="#51515e" stroke-width=".6"/><path d="M1317.1 512.9L1335.6 508.1L1321.5 527.6Z" fill="#7a7a82" stroke="#7a7a82" stroke-width=".6"/><path d="M1335.6 508.1L1342.4 542.7L1321.5 527.6Z" fill="#6b6b75" stroke="#6b6b75" stroke-width=".6"/><path d="M1321.5 527.6L1342.4 542.7L1312.9 561.5Z" fill="#6d6d77" stroke="#6d6d77" stroke-width=".6"/><path d="M1342.4 542.7L1335.0 557.8L1312.9 561.5Z" fill="#4f4f5d" stroke="#4f4f5d" stroke-width=".6"/><path d="M1312.9 561.5L1335.0 557.8L1317.4 577.1Z" fill="#5b5b67" stroke="#5b5b67" stroke-width=".6"/><path d="M1339.4 234.5L1364.7 228.0L1348.6 267.9Z" fill="#74747d" stroke="#74747d" stroke-width=".6"/><path d="M1364.7 228.0L1372.7 257.0L1348.6 267.9Z" fill="#84848b" stroke="#84848b" stroke-width=".6"/><path d="M1348.6 267.9L1372.7 257.0L1339.5 276.5Z" fill="#676772" stroke="#676772" stroke-width=".6"/><path d="M1372.7 257.0L1372.3 284.2L1339.5 276.5Z" fill="#6d6d77" stroke="#6d6d77" stroke-width=".6"/><path d="M1339.5 276.5L1372.3 284.2L1346.1 299.7Z" fill="#60606b" stroke="#60606b" stroke-width=".6"/><path d="M1372.3 284.2L1370.8 298.9L1346.1 299.7Z" fill="#73737c" stroke="#73737c" stroke-width=".6"/><path d="M1346.1 299.7L1370.8 298.9L1333.1 335.2Z" fill="#797981" stroke="#797981" stroke-width=".6"/><path d="M1370.8 298.9L1370.1 323.0L1333.1 335.2Z" fill="#62626d" stroke="#62626d" stroke-width=".6"/><path d="M1333.1 335.2L1370.1 323.0L1340.6 356.8Z" fill="#6d6d77" stroke="#6d6d77" stroke-width=".6"/><path d="M1370.1 323.0L1363.3 357.2L1340.6 356.8Z" fill="#797981" stroke="#797981" stroke-width=".6"/><path d="M1340.6 356.8L1363.3 357.2L1340.3 380.9Z" fill="#84848b" stroke="#84848b" stroke-width=".6"/><path d="M1363.3 357.2L1370.9 368.3L1340.3 380.9Z" fill="#797982" stroke="#797982" stroke-width=".6"/><path d="M1340.3 380.9L1370.9 368.3L1341.3 390.9Z" fill="#6e6e78" stroke="#6e6e78" stroke-width=".6"/><path d="M1370.9 368.3L1359.9 395.2L1341.3 390.9Z" fill="#64646f" stroke="#64646f" stroke-width=".6"/><path d="M1341.3 390.9L1359.9 395.2L1333.3 420.9Z" fill="#666671" stroke="#666671" stroke-width=".6"/><path d="M1359.9 395.2L1365.3 417.9L1333.3 420.9Z" fill="#696973" stroke="#696973" stroke-width=".6"/><path d="M1333.3 420.9L1365.3 417.9L1344.5 450.4Z" fill="#71717a" stroke="#71717a" stroke-width=".6"/><path d="M1365.3 417.9L1358.2 438.4L1344.5 450.4Z" fill="#6e6e78" stroke="#6e6e78" stroke-width=".6"/><path d="M1344.5 450.4L1358.2 438.4L1334.6 468.2Z" fill="#808088" stroke="#808088" stroke-width=".6"/><path d="M1358.2 438.4L1369.0 473.2L1334.6 468.2Z" fill="#71717a" stroke="#71717a" stroke-width=".6"/><path d="M1334.6 468.2L1369.0 473.2L1339.7 489.1Z" fill="#5c5c68" stroke="#5c5c68" stroke-width=".6"/><path d="M1369.0 473.2L1356.7 490.1L1339.7 489.1Z" fill="#787881" stroke="#787881" stroke-width=".6"/><path d="M1339.7 489.1L1356.7 490.1L1335.6 508.1Z" fill="#71717b" stroke="#71717b" stroke-width=".6"/><path d="M1356.7 490.1L1369.6 503.7L1335.6 508.1Z" fill="#686872" stroke="#686872" stroke-width=".6"/><path d="M1335.6 508.1L1369.6 503.7L1342.4 542.7Z" fill="#5e5e69" stroke="#5e5e69" stroke-width=".6"/><path d="M1369.6 503.7L1371.1 528.1L1342.4 542.7Z" fill="#51515e" stroke="#51515e" stroke-width=".6"/><path d="M1342.4 542.7L1371.1 528.1L1335.0 557.8Z" fill="#595965" stroke="#595965" stroke-width=".6"/><path d="M1371.1 528.1L1366.8 558.9L1335.0 557.8Z" fill="#6e6e78" stroke="#6e6e78" stroke-width=".6"/><path d="M1335.0 557.8L1366.8 558.9L1347.5 589.4Z" fill="#5a5a66" stroke="#5a5a66" stroke-width=".6"/>
</g>
<path d="M848.7 291.6C859.3 291.6 879.7 295.3 895.7 296.6C911.8 297.9 930.0 298.8 945.0 299.4C960.0 299.9 971.3 300.2 985.4 299.9C999.5 299.6 1012.3 298.9 1029.7 297.7C1047.1 296.5 1072.2 295.1 1090.0 292.5C1107.8 289.9 1128.8 285.1 1136.5 282.4C1144.2 279.6 1135.8 278.2 1136.0 276.0C1136.2 273.8 1136.5 270.8 1137.5 269.0C1138.5 267.2 1140.1 266.3 1142.0 265.5C1143.9 264.7 1146.5 264.4 1149.0 264.3C1151.5 264.2 1154.9 264.6 1157.0 265.0C1159.1 265.4 1160.5 267.7 1161.5 267.0C1162.5 266.3 1162.7 262.8 1163.0 261.0C1163.3 259.2 1162.8 257.4 1163.5 256.0C1164.2 254.6 1165.2 253.4 1167.0 252.5C1168.8 251.6 1170.2 251.3 1174.0 250.8C1177.8 250.3 1185.3 249.8 1190.0 249.5C1194.7 249.2 1199.3 248.8 1202.0 248.9C1204.7 249.1 1202.2 251.1 1206.3 250.4C1210.4 249.7 1217.5 246.2 1226.7 244.5C1235.9 242.8 1256.3 239.7 1261.6 240.2C1266.9 240.7 1263.1 244.8 1258.7 247.5C1254.3 250.2 1238.3 252.3 1235.4 256.2C1232.5 260.1 1239.2 264.9 1241.2 270.7C1243.2 276.5 1243.2 285.5 1247.1 291.1C1251.0 296.7 1260.7 301.8 1264.5 304.2C1268.3 306.6 1269.1 301.7 1270.0 305.6C1270.9 309.5 1275.8 323.3 1270.0 327.4C1264.2 331.5 1248.4 327.6 1235.4 330.3C1222.4 333.0 1202.0 338.8 1191.8 343.4C1181.6 348.0 1180.7 351.2 1174.4 358.0C1168.1 364.8 1159.8 375.5 1154.0 384.2C1148.2 392.9 1142.6 402.9 1139.4 410.3C1136.2 417.8 1137.3 423.2 1135.1 428.9C1132.9 434.6 1130.4 439.6 1126.3 444.4C1122.2 449.2 1114.4 449.0 1110.7 457.7C1107.0 466.4 1102.6 484.1 1104.1 496.5C1105.6 508.9 1115.2 524.0 1119.6 532.0C1124.0 540.0 1129.2 541.2 1130.7 544.2C1132.2 547.2 1131.5 549.2 1128.5 549.7C1125.5 550.2 1117.8 549.2 1113.0 547.5C1108.2 545.8 1103.7 544.0 1099.6 539.7C1095.5 535.5 1090.6 529.4 1088.6 522.0C1086.6 514.6 1089.7 507.0 1087.5 495.4C1085.3 483.8 1079.0 459.5 1075.3 452.1C1071.6 444.7 1067.5 447.9 1065.3 451.0C1063.1 454.1 1062.2 464.0 1062.0 471.0C1061.8 478.0 1061.8 486.2 1064.2 493.2C1066.6 500.2 1074.8 508.7 1076.4 513.1C1078.1 517.5 1076.7 518.5 1074.1 519.8C1071.5 521.1 1064.8 522.0 1060.8 520.9C1056.8 519.8 1052.2 516.1 1049.8 513.1C1047.4 510.1 1047.0 507.9 1046.4 503.1C1045.8 498.3 1047.9 493.4 1046.4 484.3C1044.9 475.2 1041.3 454.0 1037.6 448.8C1033.9 443.6 1031.3 450.9 1024.3 453.3C1017.3 455.7 1004.6 461.2 995.4 463.2C986.1 465.2 978.1 466.0 968.8 465.5C959.5 465.0 946.7 461.4 939.6 460.4C932.5 459.4 930.3 458.4 926.1 459.4C921.9 460.4 917.1 462.6 914.4 466.2C911.6 469.8 911.2 478.4 909.6 480.7C908.0 483.0 906.2 481.7 904.7 479.8C903.2 477.9 903.5 470.1 900.9 469.1C898.3 468.1 892.1 471.6 889.2 473.9C886.3 476.2 885.2 482.0 883.4 482.7C881.6 483.4 879.5 479.6 878.5 477.8C877.5 476.0 878.4 471.2 877.6 472.0C876.8 472.8 875.0 477.7 873.7 482.7C872.4 487.7 869.8 495.6 869.8 502.1C869.8 508.6 871.1 515.4 873.7 521.5C876.3 527.6 881.6 533.4 885.3 538.9C889.0 544.4 895.4 550.7 896.0 554.4C896.6 558.1 892.3 560.1 889.2 561.2C886.1 562.3 881.8 563.0 877.6 561.2C873.4 559.4 866.9 554.2 864.0 550.5C861.1 546.8 861.6 541.5 860.1 538.9C858.6 536.3 856.4 536.8 855.3 535.0C854.2 533.2 855.1 530.0 853.3 528.2C851.5 526.4 846.9 527.1 844.6 524.4C842.4 521.7 841.2 514.4 839.8 511.8C838.3 509.2 837.2 514.4 835.9 508.9C834.6 503.4 833.1 488.4 832.0 478.8C830.9 469.2 830.9 455.2 829.1 451.6C827.3 448.0 824.7 454.4 821.0 457.2C817.3 460.0 811.3 465.9 807.1 468.2C802.9 470.5 797.4 473.8 796.0 471.0C794.6 468.2 796.9 459.4 798.8 451.6C800.6 443.8 804.1 433.2 807.1 424.0C810.1 414.8 814.7 402.8 816.8 396.3C818.9 389.8 819.1 392.6 819.6 385.2C820.1 377.8 819.9 362.6 819.6 352.0C819.3 341.4 817.5 328.9 817.7 321.5C817.9 314.1 818.6 311.8 821.0 307.7C823.4 303.6 827.4 299.3 832.0 296.6C836.6 293.9 838.1 291.6 848.7 291.6Z" fill="none" stroke="#f0a03a" stroke-width="1.1"/>
</svg>
<svg class="a" style="left:0;top:0" width="1268" height="722">
<line x1="1025.5" y1="535" x2="1026.5" y2="470" stroke="#18c818" stroke-width="1.3"/>
<path d="M1021.5 472.5 L1026.5 455.5 L1031.5 472.5 Z" fill="#10e010"/>
<line x1="1030" y1="535.6" x2="1092" y2="534.2" stroke="#d81010" stroke-width="1.5"/>
<path d="M1090.5 530 L1111 534 L1090.5 538.5 Z" fill="#f01010"/>
<line x1="1034" y1="541" x2="1072" y2="566" stroke="#1010e0" stroke-width="1.4"/>
<ellipse cx="1064" cy="561" rx="6" ry="4.5" transform="rotate(35 1064 561)" fill="#0a20f0"/>
<circle cx="1025.5" cy="535.5" r="14" fill="none" stroke="#e8e8e8" stroke-width="1.3"/>
<circle cx="1025.5" cy="535.5" r="14" fill="none" stroke="#b82020" stroke-width="1" stroke-dasharray="0"/>
<circle cx="1025.5" cy="535.5" r="14" fill="none" stroke="#f0f0f0" stroke-width="1.3"/>
<circle cx="1025.5" cy="535.5" r="2.6" fill="#e8a040" stroke="#3a2a10" stroke-width=".6"/>
</svg>
<div id="blinfo" class="a"><svg class="a" style="left:-1px;top:5px" width="16" height="17" viewBox="0 0 16 17"><path d="M0.5 5.5 L6.5 5.5 L3 2.5 L7 2.5 L9 4.2 C12.5 4.2 15 6.6 15 9.8 C15 13 12.5 15.5 9.3 15.5 C6 15.5 3.6 13.2 3.6 10.5 L1 12.5 L1.5 10 L4.5 7.8 Z" fill="#f08a1c" stroke="#5a3000" stroke-width=".5"/><circle cx="9.3" cy="9.8" r="3.6" fill="#fff"/><circle cx="9.3" cy="9.8" r="2.2" fill="#2a5aa8"/></svg><span class="a" style="left:24px;top:8px;font-size:11.5px;color:#0e0e0e;white-space:pre">v2.79 | Verts:2,903 | Faces:5,804 | Tris:5,804 | Objects:1/1 | Lamps:0/0 | Mem:27.43M | cow.obj</span></div>

<div id="bltabs" class="a"></div>
<div class="a tab" style="top:222px;height:57px"><span class="vt" style="left:3px;top:55px">Animation</span></div>
<div class="a tab" style="top:284px;height:47px"><span class="vt" style="left:3px;top:44px">Physics</span></div>
<div class="a tab" style="top:337px;height:79px"><span class="vt" style="left:3px;top:73px">Grease Pencil</span></div>
<div id="blpanel" class="a">
  <div class="a bbtn" style="left:9px;top:-6px;height:12px;border-radius:0"></div>
  <div class="a bbtn" style="left:9px;top:5px;height:20px;border-radius:0"><span class="a bt" style="left:5px;top:3px">D</span></div>
  <div class="a bbtn" style="left:9px;top:25px;height:21px;border-radius:0 0 5px 5px;border-top:none"><span class="a bt" style="left:5px;top:3px">D</span></div>
  <div class="a bbtn" style="left:9px;top:52px;height:19px"><span class="a bt" style="left:3px;top:2px">Jo</span></div>
  <div class="a bbtn" style="left:9px;top:76px;height:20px;background:linear-gradient(#4e4e4e,#3e3e3e)"><svg class="a" style="left:6px;top:3px" width="8" height="14"><path d="M1 6H7L4 1Z M1 8H7L4 13Z" fill="#d8d8d8"/></svg></div>
  <span class="a bt" style="left:16px;top:105px">Sh</span>
  <div class="a bbtn" style="left:9px;top:121px;height:20px"><div class="a" style="left:9px;top:0;width:1px;height:18px;background:#222"></div></div>
  <span class="a bt" style="left:16px;top:150px">D</span>
  <div class="a bbtn" style="left:9px;top:166px;height:20px"><div class="a" style="left:9px;top:0;width:1px;height:18px;background:#222"></div></div>
  <div class="a" style="left:6px;top:193px;width:26px;height:1px;background:#3a3a3a"></div>
  <svg class="a" style="left:13px;top:201px" width="10" height="10"><path d="M1 1L9 5L1 9Z" fill="#2a2a2a"/></svg><span class="a bt" style="left:21px;top:199px">Hi</span>
</div>
<div class="a" style="left:7px;top:479px;width:57px;height:216px;background:#787878;border-top:1px solid #6a6a6a">
  <svg class="a" style="left:12px;top:6px" width="10" height="10"><path d="M0 1H10L5 9Z" fill="#222"/></svg><span class="a bt" style="left:25px;top:4px;font-size:12.5px">Weig</span>
</div>
<div class="a" style="left:64px;top:230px;width:112px;height:40px;background:linear-gradient(#2a2a2a,rgba(57,57,57,0))"></div>
<svg class="a" style="left:64px;top:630px" width="112" height="65">
  <path d="M25.5 39.5 V14" stroke="#10c810" stroke-width="2"/><path d="M25 38.5 H51" stroke="#d01818" stroke-width="2"/><rect x="24.5" y="38" width="2" height="2" fill="#1010e0"/>
  <text x="27" y="13" font-family="Liberation Sans" font-size="11" fill="#20b820">y</text>
  <text x="53.5" y="36" font-family="Liberation Sans" font-size="11" fill="#c01818">x</text>
  <text x="27.5" y="38.5" font-family="Liberation Sans" font-size="10" fill="#2020e0">z</text>
  <text x="70" y="54.8" font-family="Liberation Sans" font-size="11.6" fill="#e4e4e4">(1) cow</text>
</svg>
<div id="blhdr" class="a">
  <div class="a" style="left:10px;top:2px;width:31px;height:20px;border-radius:5px;background:linear-gradient(#555,#474747);border:1px solid #333"><svg class="a" style="left:3px;top:1px" width="26" height="17"><path d="M2 3.5L7.5 1.5L14 3.5V12.5L7.5 15.5L2 12.5Z" fill="#ececec" stroke="#1a1a1a" stroke-width="1"/><path d="M8.5 5.5L14 3.5V12.5L8.5 15Z" fill="#6a6a6a"/><path d="M2 3.5L8.5 5.5L14 3.5M8.5 5.5V15" fill="none" stroke="#1a1a1a" stroke-width=".7"/><path d="M17 7.5H23L20 3Z M17 10H23L20 14.5Z" fill="#c4c4c4"/></svg></div>
  <span class="a bt" style="left:53px;top:6px;font-size:12.2px">View</span>
  <span class="a bt" style="left:98px;top:6px;font-size:12.2px">Select</span>
  <span class="a bt" style="left:149px;top:6px;font-size:12.2px">Add</span>
  <svg class="a" style="left:0;top:14px" width="14" height="12"><path d="M0 2L10 12M0 6L6 12M0 10L2 12" stroke="#444" stroke-width="1"/></svg>
</div>
<svg class="a" style="left:784px;top:695px" width="140" height="27">
<rect x="-6" y="3.5" width="12" height="18.5" rx="3" fill="#8c8c8c" stroke="#3a3a3a"/>
<rect x="5.5" y="3.5" width="32" height="18.5" fill="#4a4a4a" stroke="#3a3a3a"/>
<path d="M9 12.8H29" stroke="#d8d8d8" stroke-width="1"/><path d="M9.5 9V17M13.5 10V16M20.5 10V16M24.5 9V17" stroke="#d0d0d0" stroke-width="1"/>
<rect x="15" y="7.5" width="3.5" height="11" rx="1.5" fill="#4a8ae8" stroke="#f0f0f0" stroke-width=".9"/>
<path d="M29.5 11H34.5L32 7.5Z M29.5 14.5H34.5L32 18Z" fill="#aaa"/>
<path d="M37.5 3.5H53.3A4 4 0 0 1 57.3 7.5V18A4 4 0 0 1 53.3 22H37.5Z" fill="#959595" stroke="#3a3a3a"/>
<path d="M40 13.5H55M40 18.5H55M45.5 10V21M50.5 8V21" stroke="#f0f0f0" stroke-width="1"/><path d="M41 14H55M41 19H55M46 10V21M51 8V21" stroke="#222" stroke-width=".6"/>
<circle cx="43.5" cy="11" r="3.6" fill="#2a6ae0" stroke="#f4f4f4" stroke-width="1.4"/><circle cx="43.5" cy="11" r="1" fill="#fff"/>
<path d="M68 3.5H82.4V22H68A4 4 0 0 1 64 18V7.5A4 4 0 0 1 68 3.5Z" fill="#8c8c8c" stroke="#3a3a3a"/>
<path d="M82.4 3.5H98.4A4 4 0 0 1 102.4 7.5V18A4 4 0 0 1 98.4 22H82.4Z" fill="#8c8c8c" stroke="#3a3a3a"/>
<rect x="67" y="9.5" width="13" height="10" rx="1" fill="#d8d8d8" stroke="#111" stroke-width=".8"/><rect x="68" y="12" width="11" height="6.5" fill="#444"/><circle cx="74.5" cy="15" r="3.2" fill="#777" stroke="#111" stroke-width=".8"/><circle cx="74.5" cy="15" r="1.5" fill="#7a2a20"/><circle cx="69" cy="11.5" r=".8" fill="#e02020"/>
<circle cx="79.5" cy="7.5" r="3.2" fill="#e8c820"/><path d="M79.5 5.5V9.5M77.5 7.5H81.5" stroke="#fff" stroke-width="1.2"/>
<rect x="85.5" y="13" width="14" height="8" fill="#444" stroke="#111" stroke-width=".8"/><path d="M87.5 17.5H97.5" stroke="#aaa" stroke-width=".8"/>
<path d="M85 12.5L98 7L99.5 10L86.5 14.5Z" fill="#eee" stroke="#111" stroke-width=".8"/><path d="M86 11V15" stroke="#4a8ae0" stroke-width="2"/><path d="M89 10.5L90.5 12.5M93 9L94.5 11M96.5 7.5L98 9.5" stroke="#333" stroke-width="1"/>
</svg>
<div id="gimp" class="a">
  <div class="a" style="left:19px;top:46px;width:570px;height:647px;background:#f1f0ef"></div><div class="a" style="left:50px;top:180px;width:512px;height:512px;background:#efefef"></div>
</div>
<div id="btitle" class="a"></div>
<div id="gtitle" class="a"><span class="a" style="left:311px;top:4px;letter-spacing:.1px;white-space:pre">or, 1 layer) 256x256 – GIMP</span></div>
<svg class="a" style="left:0;top:0" width="1268" height="722"><defs><clipPath id="rc"><rect x="176" y="32" width="592" height="666"/></clipPath></defs><g clip-path="url(#rc)">
<g stroke="#4b4b4b" stroke-width="1"><line x1="196.5" y1="46" x2="196.5" y2="50.5"/><line x1="206.5" y1="41.5" x2="206.5" y2="50.5"/><line x1="216.5" y1="46" x2="216.5" y2="50.5"/><line x1="226.5" y1="34" x2="226.5" y2="50.5"/><line x1="236.5" y1="46" x2="236.5" y2="50.5"/><line x1="246.5" y1="41.5" x2="246.5" y2="50.5"/><line x1="256.5" y1="46" x2="256.5" y2="50.5"/><line x1="266.5" y1="41.5" x2="266.5" y2="50.5"/><line x1="276.5" y1="46" x2="276.5" y2="50.5"/><line x1="286.5" y1="41.5" x2="286.5" y2="50.5"/><line x1="296.5" y1="46" x2="296.5" y2="50.5"/><line x1="306.5" y1="41.5" x2="306.5" y2="50.5"/><line x1="316.5" y1="46" x2="316.5" y2="50.5"/><line x1="326.5" y1="34" x2="326.5" y2="50.5"/><line x1="336.5" y1="46" x2="336.5" y2="50.5"/><line x1="346.5" y1="41.5" x2="346.5" y2="50.5"/><line x1="356.5" y1="46" x2="356.5" y2="50.5"/><line x1="366.5" y1="41.5" x2="366.5" y2="50.5"/><line x1="376.5" y1="46" x2="376.5" y2="50.5"/><line x1="386.5" y1="41.5" x2="386.5" y2="50.5"/><line x1="396.5" y1="46" x2="396.5" y2="50.5"/><line x1="406.5" y1="41.5" x2="406.5" y2="50.5"/><line x1="416.5" y1="46" x2="416.5" y2="50.5"/><line x1="426.5" y1="34" x2="426.5" y2="50.5"/><line x1="436.5" y1="46" x2="436.5" y2="50.5"/><line x1="446.5" y1="41.5" x2="446.5" y2="50.5"/><line x1="456.5" y1="46" x2="456.5" y2="50.5"/><line x1="466.5" y1="41.5" x2="466.5" y2="50.5"/><line x1="476.5" y1="46" x2="476.5" y2="50.5"/><line x1="486.5" y1="41.5" x2="486.5" y2="50.5"/><line x1="496.5" y1="46" x2="496.5" y2="50.5"/><line x1="506.5" y1="41.5" x2="506.5" y2="50.5"/><line x1="516.5" y1="46" x2="516.5" y2="50.5"/><line x1="526.5" y1="34" x2="526.5" y2="50.5"/><line x1="536.5" y1="46" x2="536.5" y2="50.5"/><line x1="546.5" y1="41.5" x2="546.5" y2="50.5"/><line x1="556.5" y1="46" x2="556.5" y2="50.5"/><line x1="566.5" y1="41.5" x2="566.5" y2="50.5"/><line x1="576.5" y1="46" x2="576.5" y2="50.5"/><line x1="586.5" y1="41.5" x2="586.5" y2="50.5"/><line x1="596.5" y1="46" x2="596.5" y2="50.5"/><line x1="606.5" y1="41.5" x2="606.5" y2="50.5"/><line x1="616.5" y1="46" x2="616.5" y2="50.5"/><line x1="626.5" y1="34" x2="626.5" y2="50.5"/><line x1="636.5" y1="46" x2="636.5" y2="50.5"/><line x1="646.5" y1="41.5" x2="646.5" y2="50.5"/><line x1="656.5" y1="46" x2="656.5" y2="50.5"/><line x1="666.5" y1="41.5" x2="666.5" y2="50.5"/><line x1="676.5" y1="46" x2="676.5" y2="50.5"/><line x1="686.5" y1="41.5" x2="686.5" y2="50.5"/><line x1="696.5" y1="46" x2="696.5" y2="50.5"/><line x1="706.5" y1="41.5" x2="706.5" y2="50.5"/><line x1="716.5" y1="46" x2="716.5" y2="50.5"/><line x1="726.5" y1="34" x2="726.5" y2="50.5"/><line x1="736.5" y1="46" x2="736.5" y2="50.5"/><line x1="746.5" y1="41.5" x2="746.5" y2="50.5"/><line x1="756.5" y1="46" x2="756.5" y2="50.5"/><line x1="195" y1="50.5" x2="765" y2="50.5"/><line x1="189.5" y1="54.5" x2="194.5" y2="54.5"/><line x1="187" y1="64.5" x2="194.5" y2="64.5"/><line x1="189.5" y1="74.5" x2="194.5" y2="74.5"/><line x1="178" y1="84.5" x2="194.5" y2="84.5"/><line x1="189.5" y1="94.5" x2="194.5" y2="94.5"/><line x1="187" y1="104.5" x2="194.5" y2="104.5"/><line x1="189.5" y1="114.5" x2="194.5" y2="114.5"/><line x1="187" y1="124.5" x2="194.5" y2="124.5"/><line x1="189.5" y1="134.5" x2="194.5" y2="134.5"/><line x1="187" y1="144.5" x2="194.5" y2="144.5"/><line x1="189.5" y1="154.5" x2="194.5" y2="154.5"/><line x1="187" y1="164.5" x2="194.5" y2="164.5"/><line x1="189.5" y1="174.5" x2="194.5" y2="174.5"/><line x1="178" y1="184.5" x2="194.5" y2="184.5"/><line x1="189.5" y1="194.5" x2="194.5" y2="194.5"/><line x1="187" y1="204.5" x2="194.5" y2="204.5"/><line x1="189.5" y1="214.5" x2="194.5" y2="214.5"/><line x1="187" y1="224.5" x2="194.5" y2="224.5"/><line x1="189.5" y1="234.5" x2="194.5" y2="234.5"/><line x1="187" y1="244.5" x2="194.5" y2="244.5"/><line x1="189.5" y1="254.5" x2="194.5" y2="254.5"/><line x1="187" y1="264.5" x2="194.5" y2="264.5"/><line x1="189.5" y1="274.5" x2="194.5" y2="274.5"/><line x1="178" y1="284.5" x2="194.5" y2="284.5"/><line x1="189.5" y1="294.5" x2="194.5" y2="294.5"/><line x1="187" y1="304.5" x2="194.5" y2="304.5"/><line x1="189.5" y1="314.5" x2="194.5" y2="314.5"/><line x1="187" y1="324.5" x2="194.5" y2="324.5"/><line x1="189.5" y1="334.5" x2="194.5" y2="334.5"/><line x1="187" y1="344.5" x2="194.5" y2="344.5"/><line x1="189.5" y1="354.5" x2="194.5" y2="354.5"/><line x1="187" y1="364.5" x2="194.5" y2="364.5"/><line x1="189.5" y1="374.5" x2="194.5" y2="374.5"/><line x1="178" y1="384.5" x2="194.5" y2="384.5"/><line x1="189.5" y1="394.5" x2="194.5" y2="394.5"/><line x1="187" y1="404.5" x2="194.5" y2="404.5"/><line x1="189.5" y1="414.5" x2="194.5" y2="414.5"/><line x1="187" y1="424.5" x2="194.5" y2="424.5"/><line x1="189.5" y1="434.5" x2="194.5" y2="434.5"/><line x1="187" y1="444.5" x2="194.5" y2="444.5"/><line x1="189.5" y1="454.5" x2="194.5" y2="454.5"/><line x1="187" y1="464.5" x2="194.5" y2="464.5"/><line x1="189.5" y1="474.5" x2="194.5" y2="474.5"/><line x1="178" y1="484.5" x2="194.5" y2="484.5"/><line x1="189.5" y1="494.5" x2="194.5" y2="494.5"/><line x1="187" y1="504.5" x2="194.5" y2="504.5"/><line x1="189.5" y1="514.5" x2="194.5" y2="514.5"/><line x1="187" y1="524.5" x2="194.5" y2="524.5"/><line x1="189.5" y1="534.5" x2="194.5" y2="534.5"/><line x1="187" y1="544.5" x2="194.5" y2="544.5"/><line x1="189.5" y1="554.5" x2="194.5" y2="554.5"/><line x1="187" y1="564.5" x2="194.5" y2="564.5"/><line x1="189.5" y1="574.5" x2="194.5" y2="574.5"/><line x1="178" y1="584.5" x2="194.5" y2="584.5"/><line x1="189.5" y1="594.5" x2="194.5" y2="594.5"/><line x1="187" y1="604.5" x2="194.5" y2="604.5"/><line x1="189.5" y1="614.5" x2="194.5" y2="614.5"/><line x1="187" y1="624.5" x2="194.5" y2="624.5"/><line x1="189.5" y1="634.5" x2="194.5" y2="634.5"/><line x1="187" y1="644.5" x2="194.5" y2="644.5"/><line x1="189.5" y1="654.5" x2="194.5" y2="654.5"/><line x1="187" y1="664.5" x2="194.5" y2="664.5"/><line x1="189.5" y1="674.5" x2="194.5" y2="674.5"/><line x1="178" y1="684.5" x2="194.5" y2="684.5"/><line x1="189.5" y1="694.5" x2="194.5" y2="694.5"/><line x1="194.5" y1="51" x2="194.5" y2="698"/></g>
<g font-family="Liberation Sans" font-size="12.5" fill="#4b4b4b"><text x="228" y="43.6">0</text><text x="328" y="43.6">50</text><text x="428" y="43.6">100</text><text x="528" y="43.6">150</text><text x="628" y="43.6">200</text><text x="728" y="43.6">250</text><text x="178" y="94.0" font-size="11.5">-</text><text x="178" y="105.3" font-size="11.5">5</text><text x="178" y="116.6" font-size="11.5">0</text><text x="178" y="194.0" font-size="11.5">0</text><text x="178" y="294.0" font-size="11.5">5</text><text x="178" y="305.3" font-size="11.5">0</text><text x="178" y="394.0" font-size="11.5">1</text><text x="178" y="405.3" font-size="11.5">0</text><text x="178" y="416.6" font-size="11.5">0</text><text x="178" y="494.0" font-size="11.5">1</text><text x="178" y="505.3" font-size="11.5">5</text><text x="178" y="516.6" font-size="11.5">0</text><text x="178" y="594.0" font-size="11.5">2</text><text x="178" y="605.3" font-size="11.5">0</text><text x="178" y="616.6" font-size="11.5">0</text><text x="178" y="694.0" font-size="11.5">2</text></g></g>
</svg>
<svg class="a" style="left:0;top:0" width="1268" height="722"><rect x="226.5" y="184.5" width="511" height="511" fill="none" stroke="#ffff00" stroke-width="1"/><rect x="226.5" y="184.5" width="511" height="511" fill="none" stroke="#000" stroke-width="1" stroke-dasharray="4 4"/></svg>
<svg class="a" style="left:0;top:0" width="1268" height="722">
<defs>
<clipPath id="gc"><path d="M312.5 332.5 L319.7 326.2 L340.4 326.2 L345.8 328.9 L367.4 342.4 L380.0 346.9 L396.2 351.4 L419.6 350.5 L440.0 345.4 L461.2 340.2 L489.5 333.6 L503.6 330.0 L510.7 324.2 L529.5 316.0 L541.3 305.3 L562.5 301.8 L583.7 293.5 L602.5 288.4 L619.0 286.0 L630.8 287.0 L640.2 295.9 L646.0 305.3 L647.2 312.4 L648.4 352.4 L649.6 361.8 L647.2 380.7 L654.1 393.3 L657.4 404.4 L658.5 422.0 L654.0 424.3 L648.4 425.4 L643.7 420.7 L645.0 432.5 L648.6 437.6 L649.7 446.4 L646.4 462.0 L647.5 496.3 L644.1 497.4 L640.8 520.6 L632.0 522.9 L622.0 518.4 L620.9 512.9 L626.4 500.7 L633.0 486.3 L634.2 464.2 L629.7 453.1 L623.0 446.4 L614.2 446.4 L613.1 455.3 L606.5 456.4 L603.2 450.9 L602.0 467.5 L594.3 473.0 L591.0 486.3 L578.8 487.4 L568.8 484.1 L570.0 476.3 L583.2 463.0 L585.4 462.0 L584.3 456.4 L581.0 450.9 L563.3 462.0 L548.5 466.6 L513.0 468.8 L484.2 468.8 L482.0 475.4 L475.3 508.7 L469.8 522.0 L470.9 545.2 L467.6 546.4 L466.5 567.4 L457.6 571.9 L448.7 568.5 L444.3 563.0 L448.7 553.0 L456.5 535.3 L456.5 513.1 L454.3 486.5 L433.2 486.0 L433.2 487.6 L430.0 508.7 L432.0 518.6 L426.6 519.8 L424.3 533.0 L420.0 539.7 L408.8 539.7 L401.0 536.4 L400.0 529.7 L413.3 517.5 L418.8 504.2 L420.0 486.5 L413.3 479.9 L400.0 471.0 L397.7 453.3 L383.6 436.0 L371.0 421.6 L362.0 418.0 L351.2 420.7 L321.5 422.5 L311.6 425.2 L301.7 421.6 L296.3 416.2 L297.2 400.0 L307.0 396.4 L317.0 382.0 L320.6 374.8 L322.4 360.4 L326.0 353.2 L335.0 349.6 L332.3 337.0 L317.0 334.3 Z"/></clipPath>
<linearGradient id="gg" gradientUnits="userSpaceOnUse" x1="296" y1="0" x2="660" y2="0">
<stop offset="0" stop-color="#d83000"/><stop offset="0.2" stop-color="#c83c00"/><stop offset="0.34" stop-color="#8c7a00"/><stop offset="0.43" stop-color="#7f8400"/><stop offset="0.56" stop-color="#58a800"/><stop offset="0.72" stop-color="#28d000"/><stop offset="0.84" stop-color="#00f000"/><stop offset="0.94" stop-color="#00c840"/><stop offset="1" stop-color="#00b050"/>
</linearGradient>
<filter id="fb" x="-50%" y="-50%" width="200%" height="200%"><feGaussianBlur stdDeviation="9"/></filter>
<filter id="fb2" x="-50%" y="-50%" width="200%" height="200%"><feGaussianBlur stdDeviation="2.5"/></filter>
<filter id="fb5" x="-50%" y="-50%" width="200%" height="200%"><feGaussianBlur stdDeviation="1.2"/></filter>
<filter id="fb4" x="-50%" y="-50%" width="200%" height="200%"><feGaussianBlur stdDeviation="5"/></filter>
</defs>
<g clip-path="url(#gc)">
<rect x="290" y="280" width="380" height="300" fill="url(#gg)"/>
<g filter="url(#fb)">
<ellipse cx="338" cy="392" rx="34" ry="26" fill="#e02200"/>
<ellipse cx="330" cy="335" rx="14" ry="8" fill="#a05800"/>
<ellipse cx="540" cy="320" rx="30" ry="14" fill="#20dc00"/>
<ellipse cx="600" cy="340" rx="14" ry="40" fill="#00f800"/>
<ellipse cx="642" cy="300" rx="10" ry="14" fill="#00b848"/>
<ellipse cx="530" cy="462" rx="45" ry="8" fill="#00e400"/>
<ellipse cx="625" cy="435" rx="20" ry="12" fill="#00906a"/>
</g>
<g filter="url(#fb4)">
<ellipse cx="400" cy="462" rx="14" ry="26" fill="#38c400"/>
<ellipse cx="470" cy="500" rx="14" ry="22" fill="#48b800"/>
<ellipse cx="388" cy="438" rx="8" ry="8" fill="#6a9400"/>
<ellipse cx="424" cy="492" rx="10" ry="10" fill="#00b048"/>
<ellipse cx="415" cy="520" rx="14" ry="28" fill="#00a450"/>
<ellipse cx="461" cy="545" rx="13" ry="32" fill="#00f400"/>
<ellipse cx="634" cy="492" rx="16" ry="36" fill="#00708c"/>
<ellipse cx="652" cy="404" rx="6" ry="18" fill="#0048b0"/>
</g>
<path d="M603.2 450.9 L602.0 467.5 L594.3 473.0 L591.0 486.3 L578.8 487.4 L568.8 484.1 L570.0 476.3 L583.2 463.0 L585.4 462.0 L584.3 456.4 L590.0 450.0 Z" fill="#0004ec" filter="url(#fb5)"/>
<path d="M348 356 L362 351 L372 349 L377 351 L377 359 L366 362 L354 361 Z" fill="#ff0800" filter="url(#fb5)"/>
<path d="M374 365 L392 367 L400 372 L400 380 L392 388 L377 375 Z" fill="#fa1000" filter="url(#fb5)"/>
</g>
</svg>
<svg class="a" style="left:0;top:0" width="1268" height="722">
<defs><linearGradient id="vsl" x1="0" x2="1"><stop offset="0" stop-color="#fbfbfb"/><stop offset="1" stop-color="#dcdcdc"/></linearGradient>
<linearGradient id="hsl" x1="0" x2="0" y1="0" y2="1"><stop offset="0" stop-color="#fbfbfb"/><stop offset="1" stop-color="#dcdcdc"/></linearGradient></defs>
<path d="M502.5 43.5H512.5L507.5 49Z" fill="#3a3a3a"/><path d="M189 380L194.5 385L189 390Z" fill="#3a3a3a"/>
<rect x="768.5" y="51.5" width="12" height="645" rx="6" fill="#d9d9d9" stroke="#a9a9a9"/><path d="M768.5 685.5H780.5V690.5A6 6 0 0 1 768.5 690.5Z" fill="#f2f2f2" stroke="#a9a9a9"/><path d="M768.5 63.5H780.5V57.5A6 6 0 0 0 768.5 57.5Z" fill="#f2f2f2" stroke="#a9a9a9"/>
<rect x="768.5" y="64.5" width="12" height="564" rx="6" fill="url(#vsl)" stroke="#9d9d9d"/>
<path d="M771.5 60.5H777.5L774.5 57Z" fill="#555"/>
<path d="M771.5 689H777.5L774.5 692.5Z" fill="#666"/>
<path d="M772 342.5H777M772 345.5H777M772 348.5H777" stroke="#999"/>
<rect x="195.5" y="701.5" width="570" height="12" rx="6" fill="#d9d9d9" stroke="#a9a9a9"/><path d="M208.5 701.5V713.5H201.5A6 6 0 0 1 201.5 701.5Z" fill="#f2f2f2" stroke="#a9a9a9"/><path d="M753.5 701.5V713.5H759.5A6 6 0 0 0 759.5 701.5Z" fill="#f2f2f2" stroke="#a9a9a9"/>
<rect x="209.5" y="701.5" width="543" height="12" rx="6" fill="url(#hsl)" stroke="#9d9d9d"/>
<path d="M204 704.5V710.5L200.5 707.5Z" fill="#555"/>
<path d="M758 704.5V710.5L761.5 707.5Z" fill="#555"/>
<rect x="180.5" y="703.5" width="10" height="9" fill="none" stroke="#777" stroke-dasharray="2 2"/>
<rect x="771.5" y="37.5" width="9" height="9" fill="none" stroke="#1a3a8a" stroke-dasharray="1.5 1.5"/>
<circle cx="775.5" cy="41.5" r="2.6" fill="none" stroke="#444" stroke-width="1.3"/><path d="M777.5 43.5L780 46" stroke="#444" stroke-width="1.5"/>
<g fill="#1f4a9a"><path d="M776 700.5L772.5 704H779.5Z M776 715.5L772.5 712H779.5Z M768.5 708L772 704.5V711.5Z M783.5 708L780 704.5V711.5Z"/><rect x="775" y="703" width="2" height="10"/><rect x="771" y="707" width="10" height="2"/></g>
<rect x="176" y="717" width="608" height="5" fill="#f2f1f0"/><line x1="176" y1="717.5" x2="784" y2="717.5" stroke="#d8d8d8"/><rect x="268.5" y="720.5" width="48" height="10" rx="3" fill="#f8f8f8" stroke="#a8a8a8"/><rect x="321.5" y="719.5" width="51" height="10" rx="3" fill="#ededed" stroke="#8a8a8a"/><rect x="377.5" y="720.5" width="14" height="10" rx="3" fill="#f8f8f8" stroke="#a8a8a8"/>
</svg>

<div id="gshadow" class="a"></div>
<div id="gedit" class="a">
  <div id="gedtitle" class="a">
    <div class="wb close" style="left:8px"><svg width="16" height="16" viewBox="0 0 16 16"><path d="M5.3 5.3L10.7 10.7M10.7 5.3L5.3 10.7" stroke="#2a1a10" stroke-width="1.2"/></svg></div>
    <div class="wb gray" style="left:27px"><svg width="16" height="16" viewBox="0 0 16 16"><path d="M4.5 8.2H11.5" stroke="#2f2e2a" stroke-width="1.3"/></svg></div>
    <div class="wb gray" style="left:46px"><svg width="16" height="16" viewBox="0 0 16 16"><rect x="5" y="5" width="6" height="6" fill="none" stroke="#2f2e2a" stroke-width="1.2"/></svg></div>
    <div class="a ttl" style="left:73px;top:6px">driver10.txt (~/Desktop) - gedit</div>
  </div>
  <div id="gedtool" class="a">
    <div class="a tbtn" style="left:8px;top:4px;width:76px;height:33px"><span class="a" style="left:8px;top:8px;font-size:14px;letter-spacing:.5px;color:#dfdbd2">Open</span><svg class="a" style="left:54px;top:12px" width="12" height="8"><path d="M1 1.5H11L6 7Z" fill="#dfdbd2"/></svg></div>
    <div class="a tbtn" style="left:93px;top:4px;width:33px;height:33px"><svg class="a" style="left:6px;top:8px" width="20" height="16" viewBox="0 0 20 16"><path d="M3.5 14.5V4.5Q3.5 3 5 3H14Q15.5 3 15.5 4.5V14.5" fill="none" stroke="#dfdbd2" stroke-width="1.8"/><path d="M2 14.5H5M14 14.5H17" stroke="#dfdbd2" stroke-width="1.8"/><path d="M6.5 9H12.5M9.5 6V12" stroke="#dfdbd2" stroke-width="2"/></svg></div>
    <div class="a tbtn" style="left:424px;top:4px;width:48px;height:33px"><span class="a" style="left:7px;top:8px;font-size:14px;letter-spacing:.4px;color:#dfdbd2">Save</span></div>
  </div>
  <div id="gedtext" class="a">eye -10 75 150
look 0 0 0
up 0 1 0
d 100
bounds -2 -2 2 2
res 256 256
model 0.0 1.0 0.0 210 1.25 0.0 -1.5 0.0 cow.obj<span style="display:inline-block;width:1px;height:15px;background:#2e3436;vertical-align:-3px;margin-left:1px"></span></div>
  <div id="gedstat" class="a">
    <span class="a" style="left:30px;top:4px;letter-spacing:.45px">Plain Text</span><svg class="a tri" style="left:102px;top:11px" width="10" height="6"><path d="M0 0H10L5 6Z" fill="#3c3c3c"/></svg>
    <span class="a" style="left:131px;top:4px;letter-spacing:.5px">Tab Width: 8</span><svg class="a tri" style="left:221px;top:11px" width="10" height="6"><path d="M0 0H10L5 6Z" fill="#3c3c3c"/></svg>
    <span class="a" style="left:287px;top:4px">Ln 7, Col 48</span><svg class="a tri" style="left:399px;top:11px" width="10" height="6"><path d="M0 0H10L5 6Z" fill="#3c3c3c"/></svg>
    <span class="a" style="left:440px;top:4px">INS</span>
  </div>
</div>
</body></html>
